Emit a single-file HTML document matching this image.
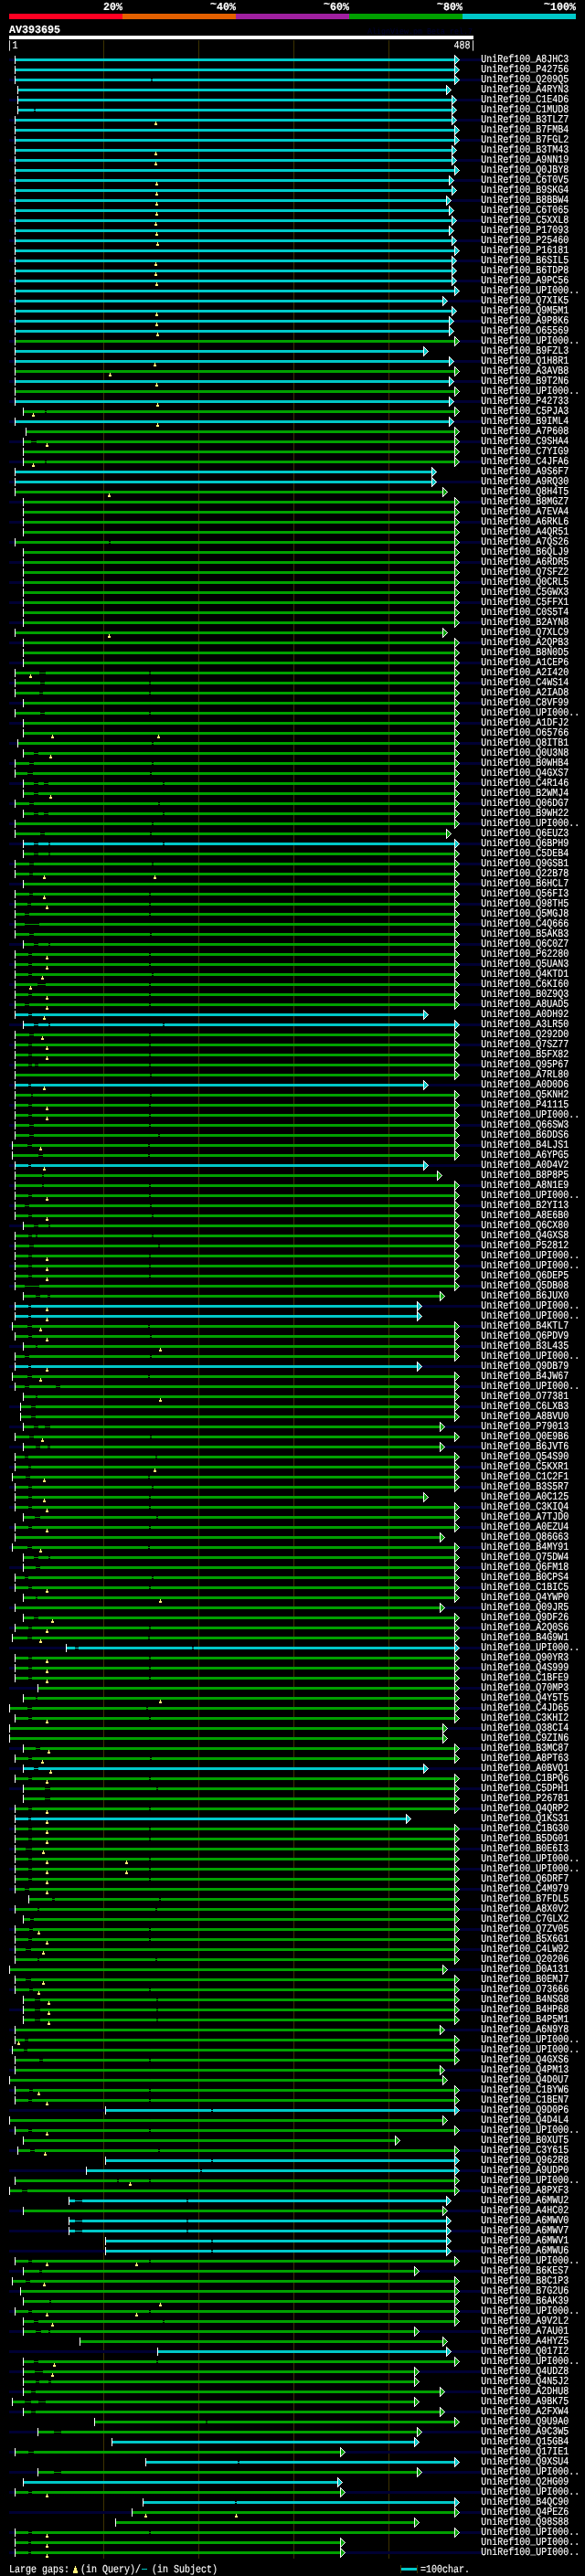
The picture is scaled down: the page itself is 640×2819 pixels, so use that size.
<!DOCTYPE html>
<html lang="en"><head><meta charset="utf-8"><title>AlignView AV393695</title>
<style>html,body{margin:0;padding:0;background:#000}body{width:640px;height:2819px;overflow:hidden}svg{display:block;will-change:transform}text{font-family:"Liberation Mono", "DejaVu Sans Mono", monospace;fill:#fff;white-space:pre;text-rendering:geometricPrecision}.b{font-weight:bold;font-size:12.1px;stroke:#fff;stroke-width:.15px}.s{font-size:12.1px;stroke:#fff;stroke-width:.12px}.t{font-size:9.1px;fill:#000033}</style></head><body>
<svg width="640" height="2819" viewBox="0 0 640 2819" shape-rendering="crispEdges">
<rect width="640" height="2819" fill="#000"/>
<rect x="10" y="15" width="124" height="6" fill="#ff0022"/>
<rect x="134" y="15" width="124" height="6" fill="#e46000"/>
<rect x="258" y="15" width="124" height="6" fill="#a020a0"/>
<rect x="382" y="15" width="124" height="6" fill="#00a000"/>
<rect x="506" y="15" width="124" height="6" fill="#00c8c8"/>
<text class="b" x="113" y="10.75" textLength="21" lengthAdjust="spacingAndGlyphs">20%</text>
<text class="b" x="230" y="10.75" dy="-3 3" textLength="28" lengthAdjust="spacingAndGlyphs">~40%</text>
<text class="b" x="354" y="10.75" dy="-3 3" textLength="28" lengthAdjust="spacingAndGlyphs">~60%</text>
<text class="b" x="478" y="10.75" dy="-3 3" textLength="28" lengthAdjust="spacingAndGlyphs">~80%</text>
<text class="b" x="595" y="10.75" dy="-3 3" textLength="35" lengthAdjust="spacingAndGlyphs">~100%</text>
<text class="b" x="10" y="35.75" textLength="56" lengthAdjust="spacingAndGlyphs">AV393695</text>
<text class="t" x="402" y="37" textLength="115" lengthAdjust="spacingAndGlyphs">AlignView.pm Beta rel.7</text>
<rect x="10" y="39" width="508" height="4" fill="#fff"/>
<text class="s" x="7.5" y="53" textLength="12" lengthAdjust="spacingAndGlyphs">|1</text>
<text class="s" x="496.5" y="53" textLength="24" lengthAdjust="spacingAndGlyphs">488|</text>
<rect x="113" y="44" width="1" height="2756" fill="#3c3200"/>
<rect x="217" y="44" width="1" height="2756" fill="#3c3200"/>
<rect x="321" y="44" width="1" height="2756" fill="#3c3200"/>
<rect x="425" y="44" width="1" height="2756" fill="#3c3200"/>
<path d="M10 64H16v3H10zM502 64H527v3H502z" fill="#000033"/>
<path d="M16 64h481v3h-481z" fill="#00c8c8"/>
<rect x="16" y="61" width="1" height="9" fill="#fff"/>
<polygon points="497.5,60.5 497.5,70.5 502.5,65.5" fill="#00c8c8" stroke="#fff" stroke-width="1"/>
<text class="s" x="526.3" y="68" textLength="96" lengthAdjust="spacingAndGlyphs" dy="0 0 0 0 0 0 0 0 0 -1 1">UniRef100_A8JHC3</text>
<path d="M16 75h481v3h-481z" fill="#00c8c8"/>
<rect x="16" y="72" width="1" height="9" fill="#fff"/>
<polygon points="497.5,71.5 497.5,81.5 502.5,76.5" fill="#00c8c8" stroke="#fff" stroke-width="1"/>
<text class="s" x="526.3" y="79" textLength="96" lengthAdjust="spacingAndGlyphs" dy="0 0 0 0 0 0 0 0 0 -1 1">UniRef100_P42756</text>
<path d="M10 86H16v3H10zM502 86H527v3H502z" fill="#000033"/>
<path d="M16 86h149v3h-149zM167 86h330v3h-330z" fill="#00c8c8"/>
<path d="M165 87h2v1h-2z" fill="#00c8c8"/>
<rect x="16" y="83" width="1" height="9" fill="#fff"/>
<polygon points="497.5,82.5 497.5,92.5 502.5,87.5" fill="#00c8c8" stroke="#fff" stroke-width="1"/>
<text class="s" x="526.3" y="90" textLength="96" lengthAdjust="spacingAndGlyphs" dy="0 0 0 0 0 0 0 0 0 -1 1">UniRef100_Q209Q5</text>
<path d="M19 97h469v3h-469z" fill="#00c8c8"/>
<rect x="19" y="94" width="1" height="9" fill="#fff"/>
<polygon points="488.5,93.5 488.5,103.5 493.5,98.5" fill="#00c8c8" stroke="#fff" stroke-width="1"/>
<text class="s" x="526.3" y="101" textLength="96" lengthAdjust="spacingAndGlyphs" dy="0 0 0 0 0 0 0 0 0 -1 1">UniRef100_A4RYN3</text>
<path d="M10 108H19v3H10zM499 108H527v3H499z" fill="#000033"/>
<path d="M19 108h475v3h-475z" fill="#00c8c8"/>
<rect x="19" y="105" width="1" height="9" fill="#fff"/>
<polygon points="494.5,104.5 494.5,114.5 499.5,109.5" fill="#00c8c8" stroke="#fff" stroke-width="1"/>
<text class="s" x="526.3" y="112" textLength="96" lengthAdjust="spacingAndGlyphs" dy="0 0 0 0 0 0 0 0 0 -1 1">UniRef100_C1E4D6</text>
<path d="M19 119h18v3h-18zM39 119h455v3h-455z" fill="#00c8c8"/>
<path d="M37 120h2v1h-2z" fill="#00c8c8"/>
<rect x="19" y="116" width="1" height="9" fill="#fff"/>
<polygon points="494.5,115.5 494.5,125.5 499.5,120.5" fill="#00c8c8" stroke="#fff" stroke-width="1"/>
<text class="s" x="526.3" y="123" textLength="96" lengthAdjust="spacingAndGlyphs" dy="0 0 0 0 0 0 0 0 0 -1 1">UniRef100_C1MUD8</text>
<path d="M10 130H16v3H10zM499 130H527v3H499z" fill="#000033"/>
<path d="M16 130h478v3h-478z" fill="#00c8c8"/>
<rect x="16" y="127" width="1" height="9" fill="#fff"/>
<polygon points="494.5,126.5 494.5,136.5 499.5,131.5" fill="#00c8c8" stroke="#fff" stroke-width="1"/>
<path d="M170 133h1v2h1v2h-3v-2h1z" fill="#fff078"/>
<text class="s" x="526.3" y="134" textLength="96" lengthAdjust="spacingAndGlyphs" dy="0 0 0 0 0 0 0 0 0 -1 1">UniRef100_B3TLZ7</text>
<path d="M16 141h481v3h-481z" fill="#00c8c8"/>
<rect x="16" y="138" width="1" height="9" fill="#fff"/>
<polygon points="497.5,137.5 497.5,147.5 502.5,142.5" fill="#00c8c8" stroke="#fff" stroke-width="1"/>
<text class="s" x="526.3" y="145" textLength="96" lengthAdjust="spacingAndGlyphs" dy="0 0 0 0 0 0 0 0 0 -1 1">UniRef100_B7FMB4</text>
<path d="M10 152H16v3H10zM502 152H527v3H502z" fill="#000033"/>
<path d="M16 152h481v3h-481z" fill="#00c8c8"/>
<rect x="16" y="149" width="1" height="9" fill="#fff"/>
<polygon points="497.5,148.5 497.5,158.5 502.5,153.5" fill="#00c8c8" stroke="#fff" stroke-width="1"/>
<text class="s" x="526.3" y="156" textLength="96" lengthAdjust="spacingAndGlyphs" dy="0 0 0 0 0 0 0 0 0 -1 1">UniRef100_B7FGL2</text>
<path d="M16 163h478v3h-478z" fill="#00c8c8"/>
<rect x="16" y="160" width="1" height="9" fill="#fff"/>
<polygon points="494.5,159.5 494.5,169.5 499.5,164.5" fill="#00c8c8" stroke="#fff" stroke-width="1"/>
<path d="M170 166h1v2h1v2h-3v-2h1z" fill="#fff078"/>
<text class="s" x="526.3" y="167" textLength="96" lengthAdjust="spacingAndGlyphs" dy="0 0 0 0 0 0 0 0 0 -1 1">UniRef100_B3TM43</text>
<path d="M10 174H16v3H10zM499 174H527v3H499z" fill="#000033"/>
<path d="M16 174h478v3h-478z" fill="#00c8c8"/>
<rect x="16" y="171" width="1" height="9" fill="#fff"/>
<polygon points="494.5,170.5 494.5,180.5 499.5,175.5" fill="#00c8c8" stroke="#fff" stroke-width="1"/>
<path d="M170 177h1v2h1v2h-3v-2h1z" fill="#fff078"/>
<text class="s" x="526.3" y="178" textLength="96" lengthAdjust="spacingAndGlyphs" dy="0 0 0 0 0 0 0 0 0 -1 1">UniRef100_A9NN19</text>
<path d="M16 185h481v3h-481z" fill="#00c8c8"/>
<rect x="16" y="182" width="1" height="9" fill="#fff"/>
<polygon points="497.5,181.5 497.5,191.5 502.5,186.5" fill="#00c8c8" stroke="#fff" stroke-width="1"/>
<text class="s" x="526.3" y="189" textLength="96" lengthAdjust="spacingAndGlyphs" dy="0 0 0 0 0 0 0 0 0 -1 1">UniRef100_Q0JBY8</text>
<path d="M10 196H16v3H10zM496 196H527v3H496z" fill="#000033"/>
<path d="M16 196h475v3h-475z" fill="#00c8c8"/>
<rect x="16" y="193" width="1" height="9" fill="#fff"/>
<polygon points="491.5,192.5 491.5,202.5 496.5,197.5" fill="#00c8c8" stroke="#fff" stroke-width="1"/>
<path d="M171 199h1v2h1v2h-3v-2h1z" fill="#fff078"/>
<text class="s" x="526.3" y="200" textLength="96" lengthAdjust="spacingAndGlyphs" dy="0 0 0 0 0 0 0 0 0 -1 1">UniRef100_C6T0V5</text>
<path d="M16 207h478v3h-478z" fill="#00c8c8"/>
<rect x="16" y="204" width="1" height="9" fill="#fff"/>
<polygon points="494.5,203.5 494.5,213.5 499.5,208.5" fill="#00c8c8" stroke="#fff" stroke-width="1"/>
<path d="M171 210h1v2h1v2h-3v-2h1z" fill="#fff078"/>
<text class="s" x="526.3" y="211" textLength="96" lengthAdjust="spacingAndGlyphs" dy="0 0 0 0 0 0 0 0 0 -1 1">UniRef100_B9SKG4</text>
<path d="M10 218H16v3H10zM493 218H527v3H493z" fill="#000033"/>
<path d="M16 218h472v3h-472z" fill="#00c8c8"/>
<rect x="16" y="215" width="1" height="9" fill="#fff"/>
<polygon points="488.5,214.5 488.5,224.5 493.5,219.5" fill="#00c8c8" stroke="#fff" stroke-width="1"/>
<path d="M171 221h1v2h1v2h-3v-2h1z" fill="#fff078"/>
<text class="s" x="526.3" y="222" textLength="96" lengthAdjust="spacingAndGlyphs" dy="0 0 0 0 0 0 0 0 0 -1 1">UniRef100_B8BBW4</text>
<path d="M16 229h475v3h-475z" fill="#00c8c8"/>
<rect x="16" y="226" width="1" height="9" fill="#fff"/>
<polygon points="491.5,225.5 491.5,235.5 496.5,230.5" fill="#00c8c8" stroke="#fff" stroke-width="1"/>
<path d="M171 232h1v2h1v2h-3v-2h1z" fill="#fff078"/>
<text class="s" x="526.3" y="233" textLength="96" lengthAdjust="spacingAndGlyphs" dy="0 0 0 0 0 0 0 0 0 -1 1">UniRef100_C6T065</text>
<path d="M10 240H16v3H10zM499 240H527v3H499z" fill="#000033"/>
<path d="M16 240h478v3h-478z" fill="#00c8c8"/>
<rect x="16" y="237" width="1" height="9" fill="#fff"/>
<polygon points="494.5,236.5 494.5,246.5 499.5,241.5" fill="#00c8c8" stroke="#fff" stroke-width="1"/>
<path d="M170 243h1v2h1v2h-3v-2h1z" fill="#fff078"/>
<text class="s" x="526.3" y="244" textLength="96" lengthAdjust="spacingAndGlyphs" dy="0 0 0 0 0 0 0 0 0 -1 1">UniRef100_C5XXL8</text>
<path d="M16 251h475v3h-475z" fill="#00c8c8"/>
<rect x="16" y="248" width="1" height="9" fill="#fff"/>
<polygon points="491.5,247.5 491.5,257.5 496.5,252.5" fill="#00c8c8" stroke="#fff" stroke-width="1"/>
<path d="M171 254h1v2h1v2h-3v-2h1z" fill="#fff078"/>
<text class="s" x="526.3" y="255" textLength="96" lengthAdjust="spacingAndGlyphs" dy="0 0 0 0 0 0 0 0 0 -1 1">UniRef100_P17093</text>
<path d="M10 262H16v3H10zM499 262H527v3H499z" fill="#000033"/>
<path d="M16 262h478v3h-478z" fill="#00c8c8"/>
<rect x="16" y="259" width="1" height="9" fill="#fff"/>
<polygon points="494.5,258.5 494.5,268.5 499.5,263.5" fill="#00c8c8" stroke="#fff" stroke-width="1"/>
<path d="M172 265h1v2h1v2h-3v-2h1z" fill="#fff078"/>
<text class="s" x="526.3" y="266" textLength="96" lengthAdjust="spacingAndGlyphs" dy="0 0 0 0 0 0 0 0 0 -1 1">UniRef100_P25460</text>
<path d="M16 273h481v3h-481z" fill="#00c8c8"/>
<rect x="16" y="270" width="1" height="9" fill="#fff"/>
<polygon points="497.5,269.5 497.5,279.5 502.5,274.5" fill="#00c8c8" stroke="#fff" stroke-width="1"/>
<text class="s" x="526.3" y="277" textLength="96" lengthAdjust="spacingAndGlyphs" dy="0 0 0 0 0 0 0 0 0 -1 1">UniRef100_P16181</text>
<path d="M10 284H16v3H10zM499 284H527v3H499z" fill="#000033"/>
<path d="M16 284h478v3h-478z" fill="#00c8c8"/>
<rect x="16" y="281" width="1" height="9" fill="#fff"/>
<polygon points="494.5,280.5 494.5,290.5 499.5,285.5" fill="#00c8c8" stroke="#fff" stroke-width="1"/>
<path d="M170 287h1v2h1v2h-3v-2h1z" fill="#fff078"/>
<text class="s" x="526.3" y="288" textLength="96" lengthAdjust="spacingAndGlyphs" dy="0 0 0 0 0 0 0 0 0 -1 1">UniRef100_B6SIL5</text>
<path d="M16 295h478v3h-478z" fill="#00c8c8"/>
<rect x="16" y="292" width="1" height="9" fill="#fff"/>
<polygon points="494.5,291.5 494.5,301.5 499.5,296.5" fill="#00c8c8" stroke="#fff" stroke-width="1"/>
<path d="M170 298h1v2h1v2h-3v-2h1z" fill="#fff078"/>
<text class="s" x="526.3" y="299" textLength="96" lengthAdjust="spacingAndGlyphs" dy="0 0 0 0 0 0 0 0 0 -1 1">UniRef100_B6TDP8</text>
<path d="M10 306H16v3H10zM499 306H527v3H499z" fill="#000033"/>
<path d="M16 306h478v3h-478z" fill="#00c8c8"/>
<rect x="16" y="303" width="1" height="9" fill="#fff"/>
<polygon points="494.5,302.5 494.5,312.5 499.5,307.5" fill="#00c8c8" stroke="#fff" stroke-width="1"/>
<path d="M171 309h1v2h1v2h-3v-2h1z" fill="#fff078"/>
<text class="s" x="526.3" y="310" textLength="96" lengthAdjust="spacingAndGlyphs" dy="0 0 0 0 0 0 0 0 0 -1 1">UniRef100_A9PC56</text>
<path d="M16 317h481v3h-481z" fill="#00c8c8"/>
<rect x="16" y="314" width="1" height="9" fill="#fff"/>
<polygon points="497.5,313.5 497.5,323.5 502.5,318.5" fill="#00c8c8" stroke="#fff" stroke-width="1"/>
<text class="s" x="526.3" y="321" textLength="108" lengthAdjust="spacingAndGlyphs" dy="0 0 0 0 0 0 0 0 0 -1 1">UniRef100_UPI000..</text>
<path d="M10 328H16v3H10zM489 328H527v3H489z" fill="#000033"/>
<path d="M16 328h468v3h-468z" fill="#00c8c8"/>
<rect x="16" y="325" width="1" height="9" fill="#fff"/>
<polygon points="484.5,324.5 484.5,334.5 489.5,329.5" fill="#00c8c8" stroke="#fff" stroke-width="1"/>
<text class="s" x="526.3" y="332" textLength="96" lengthAdjust="spacingAndGlyphs" dy="0 0 0 0 0 0 0 0 0 -1 1">UniRef100_Q7XIK5</text>
<path d="M16 339h478v3h-478z" fill="#00c8c8"/>
<rect x="16" y="336" width="1" height="9" fill="#fff"/>
<polygon points="494.5,335.5 494.5,345.5 499.5,340.5" fill="#00c8c8" stroke="#fff" stroke-width="1"/>
<path d="M171 342h1v2h1v2h-3v-2h1z" fill="#fff078"/>
<text class="s" x="526.3" y="343" textLength="96" lengthAdjust="spacingAndGlyphs" dy="0 0 0 0 0 0 0 0 0 -1 1">UniRef100_Q9M5M1</text>
<path d="M10 350H16v3H10zM496 350H527v3H496z" fill="#000033"/>
<path d="M16 350h475v3h-475z" fill="#00c8c8"/>
<rect x="16" y="347" width="1" height="9" fill="#fff"/>
<polygon points="491.5,346.5 491.5,356.5 496.5,351.5" fill="#00c8c8" stroke="#fff" stroke-width="1"/>
<path d="M171 353h1v2h1v2h-3v-2h1z" fill="#fff078"/>
<text class="s" x="526.3" y="354" textLength="96" lengthAdjust="spacingAndGlyphs" dy="0 0 0 0 0 0 0 0 0 -1 1">UniRef100_A9P8K6</text>
<path d="M16 361h475v3h-475z" fill="#00c8c8"/>
<rect x="16" y="358" width="1" height="9" fill="#fff"/>
<polygon points="491.5,357.5 491.5,367.5 496.5,362.5" fill="#00c8c8" stroke="#fff" stroke-width="1"/>
<path d="M172 364h1v2h1v2h-3v-2h1z" fill="#fff078"/>
<text class="s" x="526.3" y="365" textLength="96" lengthAdjust="spacingAndGlyphs" dy="0 0 0 0 0 0 0 0 0 -1 1">UniRef100_O65569</text>
<path d="M10 372H16v3H10zM502 372H527v3H502z" fill="#000033"/>
<path d="M16 372h481v3h-481z" fill="#00a000"/>
<rect x="16" y="369" width="1" height="9" fill="#fff"/>
<polygon points="497.5,368.5 497.5,378.5 502.5,373.5" fill="#00a000" stroke="#fff" stroke-width="1"/>
<text class="s" x="526.3" y="376" textLength="108" lengthAdjust="spacingAndGlyphs" dy="0 0 0 0 0 0 0 0 0 -1 1">UniRef100_UPI000..</text>
<path d="M16 383h447v3h-447z" fill="#00c8c8"/>
<rect x="16" y="380" width="1" height="9" fill="#fff"/>
<polygon points="463.5,379.5 463.5,389.5 468.5,384.5" fill="#00c8c8" stroke="#fff" stroke-width="1"/>
<text class="s" x="526.3" y="387" textLength="96" lengthAdjust="spacingAndGlyphs" dy="0 0 0 0 0 0 0 0 0 -1 1">UniRef100_B9FZL3</text>
<path d="M10 394H16v3H10zM496 394H527v3H496z" fill="#000033"/>
<path d="M16 394h475v3h-475z" fill="#00c8c8"/>
<rect x="16" y="391" width="1" height="9" fill="#fff"/>
<polygon points="491.5,390.5 491.5,400.5 496.5,395.5" fill="#00c8c8" stroke="#fff" stroke-width="1"/>
<path d="M169 397h1v2h1v2h-3v-2h1z" fill="#fff078"/>
<text class="s" x="526.3" y="398" textLength="96" lengthAdjust="spacingAndGlyphs" dy="0 0 0 0 0 0 0 0 0 -1 1">UniRef100_Q1H8R1</text>
<path d="M16 405h481v3h-481z" fill="#00a000"/>
<rect x="16" y="402" width="1" height="9" fill="#fff"/>
<polygon points="497.5,401.5 497.5,411.5 502.5,406.5" fill="#00a000" stroke="#fff" stroke-width="1"/>
<path d="M120 408h1v2h1v2h-3v-2h1z" fill="#fff078"/>
<text class="s" x="526.3" y="409" textLength="96" lengthAdjust="spacingAndGlyphs" dy="0 0 0 0 0 0 0 0 0 -1 1">UniRef100_A3AVB8</text>
<path d="M10 416H16v3H10zM496 416H527v3H496z" fill="#000033"/>
<path d="M16 416h475v3h-475z" fill="#00c8c8"/>
<rect x="16" y="413" width="1" height="9" fill="#fff"/>
<polygon points="491.5,412.5 491.5,422.5 496.5,417.5" fill="#00c8c8" stroke="#fff" stroke-width="1"/>
<path d="M171 419h1v2h1v2h-3v-2h1z" fill="#fff078"/>
<text class="s" x="526.3" y="420" textLength="96" lengthAdjust="spacingAndGlyphs" dy="0 0 0 0 0 0 0 0 0 -1 1">UniRef100_B9T2N6</text>
<path d="M16 427h481v3h-481z" fill="#00a000"/>
<rect x="16" y="424" width="1" height="9" fill="#fff"/>
<polygon points="497.5,423.5 497.5,433.5 502.5,428.5" fill="#00a000" stroke="#fff" stroke-width="1"/>
<text class="s" x="526.3" y="431" textLength="108" lengthAdjust="spacingAndGlyphs" dy="0 0 0 0 0 0 0 0 0 -1 1">UniRef100_UPI000..</text>
<path d="M10 438H16v3H10zM496 438H527v3H496z" fill="#000033"/>
<path d="M16 438h475v3h-475z" fill="#00c8c8"/>
<rect x="16" y="435" width="1" height="9" fill="#fff"/>
<polygon points="491.5,434.5 491.5,444.5 496.5,439.5" fill="#00c8c8" stroke="#fff" stroke-width="1"/>
<path d="M172 441h1v2h1v2h-3v-2h1z" fill="#fff078"/>
<text class="s" x="526.3" y="442" textLength="96" lengthAdjust="spacingAndGlyphs" dy="0 0 0 0 0 0 0 0 0 -1 1">UniRef100_P42733</text>
<path d="M25 449h24v3h-24zM51 449h446v3h-446z" fill="#00a000"/>
<path d="M49 450h2v1h-2z" fill="#00a000"/>
<rect x="25" y="446" width="1" height="9" fill="#fff"/>
<polygon points="497.5,445.5 497.5,455.5 502.5,450.5" fill="#00a000" stroke="#fff" stroke-width="1"/>
<path d="M36 452h1v2h1v2h-3v-2h1z" fill="#fff078"/>
<text class="s" x="526.3" y="453" textLength="96" lengthAdjust="spacingAndGlyphs" dy="0 0 0 0 0 0 0 0 0 -1 1">UniRef100_C5PJA3</text>
<path d="M10 460H16v3H10zM496 460H527v3H496z" fill="#000033"/>
<path d="M16 460h475v3h-475z" fill="#00c8c8"/>
<rect x="16" y="457" width="1" height="9" fill="#fff"/>
<polygon points="491.5,456.5 491.5,466.5 496.5,461.5" fill="#00c8c8" stroke="#fff" stroke-width="1"/>
<path d="M172 463h1v2h1v2h-3v-2h1z" fill="#fff078"/>
<text class="s" x="526.3" y="464" textLength="96" lengthAdjust="spacingAndGlyphs" dy="0 0 0 0 0 0 0 0 0 -1 1">UniRef100_B9IML4</text>
<path d="M28 471h469v3h-469z" fill="#00a000"/>
<rect x="28" y="468" width="1" height="9" fill="#fff"/>
<polygon points="497.5,467.5 497.5,477.5 502.5,472.5" fill="#00a000" stroke="#fff" stroke-width="1"/>
<text class="s" x="526.3" y="475" textLength="96" lengthAdjust="spacingAndGlyphs" dy="0 0 0 0 0 0 0 0 0 -1 1">UniRef100_A7P608</text>
<path d="M10 482H25v3H10zM502 482H527v3H502z" fill="#000033"/>
<path d="M25 482h9v3h-9zM40 482h457v3h-457z" fill="#00a000"/>
<path d="M34 483h6v1h-6z" fill="#00a000"/>
<rect x="25" y="479" width="1" height="9" fill="#fff"/>
<polygon points="497.5,478.5 497.5,488.5 502.5,483.5" fill="#00a000" stroke="#fff" stroke-width="1"/>
<path d="M51 485h1v2h1v2h-3v-2h1z" fill="#fff078"/>
<text class="s" x="526.3" y="486" textLength="96" lengthAdjust="spacingAndGlyphs" dy="0 0 0 0 0 0 0 0 0 -1 1">UniRef100_C9SHA4</text>
<path d="M25 493h472v3h-472z" fill="#00a000"/>
<rect x="25" y="490" width="1" height="9" fill="#fff"/>
<polygon points="497.5,489.5 497.5,499.5 502.5,494.5" fill="#00a000" stroke="#fff" stroke-width="1"/>
<text class="s" x="526.3" y="497" textLength="96" lengthAdjust="spacingAndGlyphs" dy="0 0 0 0 0 0 0 0 0 -1 1">UniRef100_C7YIG9</text>
<path d="M10 504H25v3H10zM502 504H527v3H502z" fill="#000033"/>
<path d="M25 504h24v3h-24zM51 504h446v3h-446z" fill="#00a000"/>
<path d="M49 505h2v1h-2z" fill="#00a000"/>
<rect x="25" y="501" width="1" height="9" fill="#fff"/>
<polygon points="497.5,500.5 497.5,510.5 502.5,505.5" fill="#00a000" stroke="#fff" stroke-width="1"/>
<path d="M36 507h1v2h1v2h-3v-2h1z" fill="#fff078"/>
<text class="s" x="526.3" y="508" textLength="96" lengthAdjust="spacingAndGlyphs" dy="0 0 0 0 0 0 0 0 0 -1 1">UniRef100_C4JFA6</text>
<path d="M16 515h456v3h-456z" fill="#00c8c8"/>
<rect x="16" y="512" width="1" height="9" fill="#fff"/>
<polygon points="472.5,511.5 472.5,521.5 477.5,516.5" fill="#00c8c8" stroke="#fff" stroke-width="1"/>
<text class="s" x="526.3" y="519" textLength="96" lengthAdjust="spacingAndGlyphs" dy="0 0 0 0 0 0 0 0 0 -1 1">UniRef100_A9S6F7</text>
<path d="M10 526H16v3H10zM477 526H527v3H477z" fill="#000033"/>
<path d="M16 526h456v3h-456z" fill="#00c8c8"/>
<rect x="16" y="523" width="1" height="9" fill="#fff"/>
<polygon points="472.5,522.5 472.5,532.5 477.5,527.5" fill="#00c8c8" stroke="#fff" stroke-width="1"/>
<text class="s" x="526.3" y="530" textLength="96" lengthAdjust="spacingAndGlyphs" dy="0 0 0 0 0 0 0 0 0 -1 1">UniRef100_A9RQ30</text>
<path d="M16 537h468v3h-468z" fill="#00a000"/>
<rect x="16" y="534" width="1" height="9" fill="#fff"/>
<polygon points="484.5,533.5 484.5,543.5 489.5,538.5" fill="#00a000" stroke="#fff" stroke-width="1"/>
<path d="M119 540h1v2h1v2h-3v-2h1z" fill="#fff078"/>
<text class="s" x="526.3" y="541" textLength="96" lengthAdjust="spacingAndGlyphs" dy="0 0 0 0 0 0 0 0 0 -1 1">UniRef100_Q8H4T5</text>
<path d="M10 548H25v3H10zM502 548H527v3H502z" fill="#000033"/>
<path d="M25 548h472v3h-472z" fill="#00a000"/>
<rect x="25" y="545" width="1" height="9" fill="#fff"/>
<polygon points="497.5,544.5 497.5,554.5 502.5,549.5" fill="#00a000" stroke="#fff" stroke-width="1"/>
<text class="s" x="526.3" y="552" textLength="96" lengthAdjust="spacingAndGlyphs" dy="0 0 0 0 0 0 0 0 0 -1 1">UniRef100_B8MGZ7</text>
<path d="M25 559h472v3h-472z" fill="#00a000"/>
<rect x="25" y="556" width="1" height="9" fill="#fff"/>
<polygon points="497.5,555.5 497.5,565.5 502.5,560.5" fill="#00a000" stroke="#fff" stroke-width="1"/>
<text class="s" x="526.3" y="563" textLength="96" lengthAdjust="spacingAndGlyphs" dy="0 0 0 0 0 0 0 0 0 -1 1">UniRef100_A7EVA4</text>
<path d="M10 570H25v3H10zM502 570H527v3H502z" fill="#000033"/>
<path d="M25 570h472v3h-472z" fill="#00a000"/>
<rect x="25" y="567" width="1" height="9" fill="#fff"/>
<polygon points="497.5,566.5 497.5,576.5 502.5,571.5" fill="#00a000" stroke="#fff" stroke-width="1"/>
<text class="s" x="526.3" y="574" textLength="96" lengthAdjust="spacingAndGlyphs" dy="0 0 0 0 0 0 0 0 0 -1 1">UniRef100_A6RKL6</text>
<path d="M25 581h472v3h-472z" fill="#00a000"/>
<rect x="25" y="578" width="1" height="9" fill="#fff"/>
<polygon points="497.5,577.5 497.5,587.5 502.5,582.5" fill="#00a000" stroke="#fff" stroke-width="1"/>
<text class="s" x="526.3" y="585" textLength="96" lengthAdjust="spacingAndGlyphs" dy="0 0 0 0 0 0 0 0 0 -1 1">UniRef100_A4QR51</text>
<path d="M10 592H16v3H10zM502 592H527v3H502z" fill="#000033"/>
<path d="M16 592h103v3h-103zM121 592h376v3h-376z" fill="#00a000"/>
<path d="M119 593h2v1h-2z" fill="#00a000"/>
<rect x="16" y="589" width="1" height="9" fill="#fff"/>
<polygon points="497.5,588.5 497.5,598.5 502.5,593.5" fill="#00a000" stroke="#fff" stroke-width="1"/>
<text class="s" x="526.3" y="596" textLength="96" lengthAdjust="spacingAndGlyphs" dy="0 0 0 0 0 0 0 0 0 -1 1">UniRef100_A7QS26</text>
<path d="M25 603h472v3h-472z" fill="#00a000"/>
<rect x="25" y="600" width="1" height="9" fill="#fff"/>
<polygon points="497.5,599.5 497.5,609.5 502.5,604.5" fill="#00a000" stroke="#fff" stroke-width="1"/>
<text class="s" x="526.3" y="607" textLength="96" lengthAdjust="spacingAndGlyphs" dy="0 0 0 0 0 0 0 0 0 -1 1">UniRef100_B6QLJ9</text>
<path d="M10 614H25v3H10zM502 614H527v3H502z" fill="#000033"/>
<path d="M25 614h472v3h-472z" fill="#00a000"/>
<rect x="25" y="611" width="1" height="9" fill="#fff"/>
<polygon points="497.5,610.5 497.5,620.5 502.5,615.5" fill="#00a000" stroke="#fff" stroke-width="1"/>
<text class="s" x="526.3" y="618" textLength="96" lengthAdjust="spacingAndGlyphs" dy="0 0 0 0 0 0 0 0 0 -1 1">UniRef100_A6RDR5</text>
<path d="M25 625h472v3h-472z" fill="#00a000"/>
<rect x="25" y="622" width="1" height="9" fill="#fff"/>
<polygon points="497.5,621.5 497.5,631.5 502.5,626.5" fill="#00a000" stroke="#fff" stroke-width="1"/>
<text class="s" x="526.3" y="629" textLength="96" lengthAdjust="spacingAndGlyphs" dy="0 0 0 0 0 0 0 0 0 -1 1">UniRef100_Q7SFZ2</text>
<path d="M10 636H25v3H10zM502 636H527v3H502z" fill="#000033"/>
<path d="M25 636h472v3h-472z" fill="#00a000"/>
<rect x="25" y="633" width="1" height="9" fill="#fff"/>
<polygon points="497.5,632.5 497.5,642.5 502.5,637.5" fill="#00a000" stroke="#fff" stroke-width="1"/>
<text class="s" x="526.3" y="640" textLength="96" lengthAdjust="spacingAndGlyphs" dy="0 0 0 0 0 0 0 0 0 -1 1">UniRef100_Q0CRL5</text>
<path d="M25 647h472v3h-472z" fill="#00a000"/>
<rect x="25" y="644" width="1" height="9" fill="#fff"/>
<polygon points="497.5,643.5 497.5,653.5 502.5,648.5" fill="#00a000" stroke="#fff" stroke-width="1"/>
<text class="s" x="526.3" y="651" textLength="96" lengthAdjust="spacingAndGlyphs" dy="0 0 0 0 0 0 0 0 0 -1 1">UniRef100_C5GWX3</text>
<path d="M10 658H25v3H10zM502 658H527v3H502z" fill="#000033"/>
<path d="M25 658h472v3h-472z" fill="#00a000"/>
<rect x="25" y="655" width="1" height="9" fill="#fff"/>
<polygon points="497.5,654.5 497.5,664.5 502.5,659.5" fill="#00a000" stroke="#fff" stroke-width="1"/>
<text class="s" x="526.3" y="662" textLength="96" lengthAdjust="spacingAndGlyphs" dy="0 0 0 0 0 0 0 0 0 -1 1">UniRef100_C5FFX1</text>
<path d="M25 669h472v3h-472z" fill="#00a000"/>
<rect x="25" y="666" width="1" height="9" fill="#fff"/>
<polygon points="497.5,665.5 497.5,675.5 502.5,670.5" fill="#00a000" stroke="#fff" stroke-width="1"/>
<text class="s" x="526.3" y="673" textLength="96" lengthAdjust="spacingAndGlyphs" dy="0 0 0 0 0 0 0 0 0 -1 1">UniRef100_C0S5T4</text>
<path d="M10 680H25v3H10zM502 680H527v3H502z" fill="#000033"/>
<path d="M25 680h472v3h-472z" fill="#00a000"/>
<rect x="25" y="677" width="1" height="9" fill="#fff"/>
<polygon points="497.5,676.5 497.5,686.5 502.5,681.5" fill="#00a000" stroke="#fff" stroke-width="1"/>
<text class="s" x="526.3" y="684" textLength="96" lengthAdjust="spacingAndGlyphs" dy="0 0 0 0 0 0 0 0 0 -1 1">UniRef100_B2AYN8</text>
<path d="M16 691h468v3h-468z" fill="#00a000"/>
<rect x="16" y="688" width="1" height="9" fill="#fff"/>
<polygon points="484.5,687.5 484.5,697.5 489.5,692.5" fill="#00a000" stroke="#fff" stroke-width="1"/>
<path d="M119 694h1v2h1v2h-3v-2h1z" fill="#fff078"/>
<text class="s" x="526.3" y="695" textLength="96" lengthAdjust="spacingAndGlyphs" dy="0 0 0 0 0 0 0 0 0 -1 1">UniRef100_Q7XLC9</text>
<path d="M10 702H25v3H10zM502 702H527v3H502z" fill="#000033"/>
<path d="M25 702h472v3h-472z" fill="#00a000"/>
<rect x="25" y="699" width="1" height="9" fill="#fff"/>
<polygon points="497.5,698.5 497.5,708.5 502.5,703.5" fill="#00a000" stroke="#fff" stroke-width="1"/>
<text class="s" x="526.3" y="706" textLength="96" lengthAdjust="spacingAndGlyphs" dy="0 0 0 0 0 0 0 0 0 -1 1">UniRef100_A2QPB3</text>
<path d="M25 713h472v3h-472z" fill="#00a000"/>
<rect x="25" y="710" width="1" height="9" fill="#fff"/>
<polygon points="497.5,709.5 497.5,719.5 502.5,714.5" fill="#00a000" stroke="#fff" stroke-width="1"/>
<text class="s" x="526.3" y="717" textLength="96" lengthAdjust="spacingAndGlyphs" dy="0 0 0 0 0 0 0 0 0 -1 1">UniRef100_B8N0D5</text>
<path d="M10 724H25v3H10zM502 724H527v3H502z" fill="#000033"/>
<path d="M25 724h472v3h-472z" fill="#00a000"/>
<rect x="25" y="721" width="1" height="9" fill="#fff"/>
<polygon points="497.5,720.5 497.5,730.5 502.5,725.5" fill="#00a000" stroke="#fff" stroke-width="1"/>
<text class="s" x="526.3" y="728" textLength="96" lengthAdjust="spacingAndGlyphs" dy="0 0 0 0 0 0 0 0 0 -1 1">UniRef100_A1CEP6</text>
<path d="M16 735h27v3h-27zM50 735h113v3h-113zM165 735h332v3h-332z" fill="#00a000"/>
<path d="M43 736h7v1h-7zM163 736h2v1h-2z" fill="#00a000"/>
<rect x="16" y="732" width="1" height="9" fill="#fff"/>
<polygon points="497.5,731.5 497.5,741.5 502.5,736.5" fill="#00a000" stroke="#fff" stroke-width="1"/>
<path d="M33 738h1v2h1v2h-3v-2h1z" fill="#fff078"/>
<text class="s" x="526.3" y="739" textLength="96" lengthAdjust="spacingAndGlyphs" dy="0 0 0 0 0 0 0 0 0 -1 1">UniRef100_A2I420</text>
<path d="M10 746H16v3H10zM502 746H527v3H502z" fill="#000033"/>
<path d="M16 746h28v3h-28zM49 746h114v3h-114zM165 746h332v3h-332z" fill="#00a000"/>
<path d="M44 747h5v1h-5zM163 747h2v1h-2z" fill="#00a000"/>
<rect x="16" y="743" width="1" height="9" fill="#fff"/>
<polygon points="497.5,742.5 497.5,752.5 502.5,747.5" fill="#00a000" stroke="#fff" stroke-width="1"/>
<text class="s" x="526.3" y="750" textLength="96" lengthAdjust="spacingAndGlyphs" dy="0 0 0 0 0 0 0 0 0 -1 1">UniRef100_C4WS14</text>
<path d="M16 757h27v3h-27zM47 757h116v3h-116zM165 757h332v3h-332z" fill="#00a000"/>
<path d="M43 758h4v1h-4zM163 758h2v1h-2z" fill="#00a000"/>
<rect x="16" y="754" width="1" height="9" fill="#fff"/>
<polygon points="497.5,753.5 497.5,763.5 502.5,758.5" fill="#00a000" stroke="#fff" stroke-width="1"/>
<text class="s" x="526.3" y="761" textLength="96" lengthAdjust="spacingAndGlyphs" dy="0 0 0 0 0 0 0 0 0 -1 1">UniRef100_A2IAD8</text>
<path d="M10 768H25v3H10zM502 768H527v3H502z" fill="#000033"/>
<path d="M25 768h472v3h-472z" fill="#00a000"/>
<rect x="25" y="765" width="1" height="9" fill="#fff"/>
<polygon points="497.5,764.5 497.5,774.5 502.5,769.5" fill="#00a000" stroke="#fff" stroke-width="1"/>
<text class="s" x="526.3" y="772" textLength="96" lengthAdjust="spacingAndGlyphs" dy="0 0 0 0 0 0 0 0 0 -1 1">UniRef100_C8VF99</text>
<path d="M16 779h28v3h-28zM49 779h114v3h-114zM165 779h332v3h-332z" fill="#00a000"/>
<path d="M44 780h5v1h-5zM163 780h2v1h-2z" fill="#00a000"/>
<rect x="16" y="776" width="1" height="9" fill="#fff"/>
<polygon points="497.5,775.5 497.5,785.5 502.5,780.5" fill="#00a000" stroke="#fff" stroke-width="1"/>
<text class="s" x="526.3" y="783" textLength="108" lengthAdjust="spacingAndGlyphs" dy="0 0 0 0 0 0 0 0 0 -1 1">UniRef100_UPI000..</text>
<path d="M10 790H25v3H10zM502 790H527v3H502z" fill="#000033"/>
<path d="M25 790h472v3h-472z" fill="#00a000"/>
<rect x="25" y="787" width="1" height="9" fill="#fff"/>
<polygon points="497.5,786.5 497.5,796.5 502.5,791.5" fill="#00a000" stroke="#fff" stroke-width="1"/>
<text class="s" x="526.3" y="794" textLength="96" lengthAdjust="spacingAndGlyphs" dy="0 0 0 0 0 0 0 0 0 -1 1">UniRef100_A1DFJ2</text>
<path d="M25 801h472v3h-472z" fill="#00a000"/>
<rect x="25" y="798" width="1" height="9" fill="#fff"/>
<polygon points="497.5,797.5 497.5,807.5 502.5,802.5" fill="#00a000" stroke="#fff" stroke-width="1"/>
<path d="M57 804h1v2h1v2h-3v-2h1z" fill="#fff078"/>
<path d="M173 804h1v2h1v2h-3v-2h1z" fill="#fff078"/>
<text class="s" x="526.3" y="805" textLength="96" lengthAdjust="spacingAndGlyphs" dy="0 0 0 0 0 0 0 0 0 -1 1">UniRef100_O65766</text>
<path d="M10 812H19v3H10zM502 812H527v3H502z" fill="#000033"/>
<path d="M19 812h147v3h-147zM168 812h329v3h-329z" fill="#00a000"/>
<path d="M166 813h2v1h-2z" fill="#00a000"/>
<rect x="19" y="809" width="1" height="9" fill="#fff"/>
<polygon points="497.5,808.5 497.5,818.5 502.5,813.5" fill="#00a000" stroke="#fff" stroke-width="1"/>
<text class="s" x="526.3" y="816" textLength="96" lengthAdjust="spacingAndGlyphs" dy="0 0 0 0 0 0 0 0 0 -1 1">UniRef100_Q8ITB1</text>
<path d="M25 823h12v3h-12zM42 823h455v3h-455z" fill="#00a000"/>
<path d="M37 824h5v1h-5z" fill="#00a000"/>
<rect x="25" y="820" width="1" height="9" fill="#fff"/>
<polygon points="497.5,819.5 497.5,829.5 502.5,824.5" fill="#00a000" stroke="#fff" stroke-width="1"/>
<path d="M55 826h1v2h1v2h-3v-2h1z" fill="#fff078"/>
<text class="s" x="526.3" y="827" textLength="96" lengthAdjust="spacingAndGlyphs" dy="0 0 0 0 0 0 0 0 0 -1 1">UniRef100_Q0U3N8</text>
<path d="M10 834H16v3H10zM502 834H527v3H502z" fill="#000033"/>
<path d="M16 834h16v3h-16zM37 834h129v3h-129zM168 834h329v3h-329z" fill="#00a000"/>
<path d="M32 835h5v1h-5zM166 835h2v1h-2z" fill="#00a000"/>
<rect x="16" y="831" width="1" height="9" fill="#fff"/>
<polygon points="497.5,830.5 497.5,840.5 502.5,835.5" fill="#00a000" stroke="#fff" stroke-width="1"/>
<text class="s" x="526.3" y="838" textLength="96" lengthAdjust="spacingAndGlyphs" dy="0 0 0 0 0 0 0 0 0 -1 1">UniRef100_B0WHB4</text>
<path d="M16 845h14v3h-14zM36 845h128v3h-128zM166 845h331v3h-331z" fill="#00a000"/>
<path d="M30 846h6v1h-6zM164 846h2v1h-2z" fill="#00a000"/>
<rect x="16" y="842" width="1" height="9" fill="#fff"/>
<polygon points="497.5,841.5 497.5,851.5 502.5,846.5" fill="#00a000" stroke="#fff" stroke-width="1"/>
<text class="s" x="526.3" y="849" textLength="96" lengthAdjust="spacingAndGlyphs" dy="0 0 0 0 0 0 0 0 0 -1 1">UniRef100_Q4GXS7</text>
<path d="M10 856H25v3H10zM502 856H527v3H502z" fill="#000033"/>
<path d="M25 856h12v3h-12zM42 856h6v3h-6zM53 856h125v3h-125zM180 856h317v3h-317z" fill="#00a000"/>
<path d="M37 857h5v1h-5zM48 857h5v1h-5zM178 857h2v1h-2z" fill="#00a000"/>
<rect x="25" y="853" width="1" height="9" fill="#fff"/>
<polygon points="497.5,852.5 497.5,862.5 502.5,857.5" fill="#00a000" stroke="#fff" stroke-width="1"/>
<text class="s" x="526.3" y="860" textLength="96" lengthAdjust="spacingAndGlyphs" dy="0 0 0 0 0 0 0 0 0 -1 1">UniRef100_C4R146</text>
<path d="M25 867h12v3h-12zM42 867h455v3h-455z" fill="#00a000"/>
<path d="M37 868h5v1h-5z" fill="#00a000"/>
<rect x="25" y="864" width="1" height="9" fill="#fff"/>
<polygon points="497.5,863.5 497.5,873.5 502.5,868.5" fill="#00a000" stroke="#fff" stroke-width="1"/>
<path d="M55 870h1v2h1v2h-3v-2h1z" fill="#fff078"/>
<text class="s" x="526.3" y="871" textLength="96" lengthAdjust="spacingAndGlyphs" dy="0 0 0 0 0 0 0 0 0 -1 1">UniRef100_B2WMJ4</text>
<path d="M10 878H16v3H10zM502 878H527v3H502z" fill="#000033"/>
<path d="M16 878h16v3h-16zM37 878h136v3h-136zM175 878h322v3h-322z" fill="#00a000"/>
<path d="M32 879h5v1h-5zM173 879h2v1h-2z" fill="#00a000"/>
<rect x="16" y="875" width="1" height="9" fill="#fff"/>
<polygon points="497.5,874.5 497.5,884.5 502.5,879.5" fill="#00a000" stroke="#fff" stroke-width="1"/>
<text class="s" x="526.3" y="882" textLength="96" lengthAdjust="spacingAndGlyphs" dy="0 0 0 0 0 0 0 0 0 -1 1">UniRef100_Q06DG7</text>
<path d="M25 889h12v3h-12zM42 889h6v3h-6zM53 889h125v3h-125zM180 889h317v3h-317z" fill="#00a000"/>
<path d="M37 890h5v1h-5zM48 890h5v1h-5zM178 890h2v1h-2z" fill="#00a000"/>
<rect x="25" y="886" width="1" height="9" fill="#fff"/>
<polygon points="497.5,885.5 497.5,895.5 502.5,890.5" fill="#00a000" stroke="#fff" stroke-width="1"/>
<text class="s" x="526.3" y="893" textLength="96" lengthAdjust="spacingAndGlyphs" dy="0 0 0 0 0 0 0 0 0 -1 1">UniRef100_B9WH22</text>
<path d="M10 900H16v3H10zM502 900H527v3H502z" fill="#000033"/>
<path d="M16 900h150v3h-150zM168 900h329v3h-329z" fill="#00a000"/>
<path d="M166 901h2v1h-2z" fill="#00a000"/>
<rect x="16" y="897" width="1" height="9" fill="#fff"/>
<polygon points="497.5,896.5 497.5,906.5 502.5,901.5" fill="#00a000" stroke="#fff" stroke-width="1"/>
<text class="s" x="526.3" y="904" textLength="108" lengthAdjust="spacingAndGlyphs" dy="0 0 0 0 0 0 0 0 0 -1 1">UniRef100_UPI000..</text>
<path d="M16 911h28v3h-28zM49 911h115v3h-115zM166 911h322v3h-322z" fill="#00a000"/>
<path d="M44 912h5v1h-5zM164 912h2v1h-2z" fill="#00a000"/>
<rect x="16" y="908" width="1" height="9" fill="#fff"/>
<polygon points="488.5,907.5 488.5,917.5 493.5,912.5" fill="#00a000" stroke="#fff" stroke-width="1"/>
<text class="s" x="526.3" y="915" textLength="96" lengthAdjust="spacingAndGlyphs" dy="0 0 0 0 0 0 0 0 0 -1 1">UniRef100_Q6EUZ3</text>
<path d="M10 922H25v3H10zM502 922H527v3H502z" fill="#000033"/>
<path d="M25 922h12v3h-12zM42 922h11v3h-11zM55 922h123v3h-123zM180 922h317v3h-317z" fill="#00c8c8"/>
<path d="M37 923h5v1h-5zM53 923h2v1h-2zM178 923h2v1h-2z" fill="#00c8c8"/>
<rect x="25" y="919" width="1" height="9" fill="#fff"/>
<polygon points="497.5,918.5 497.5,928.5 502.5,923.5" fill="#00c8c8" stroke="#fff" stroke-width="1"/>
<text class="s" x="526.3" y="926" textLength="96" lengthAdjust="spacingAndGlyphs" dy="0 0 0 0 0 0 0 0 0 -1 1">UniRef100_Q6BPH9</text>
<path d="M25 933h12v3h-12zM42 933h11v3h-11zM55 933h442v3h-442z" fill="#00a000"/>
<path d="M37 934h5v1h-5zM53 934h2v1h-2z" fill="#00a000"/>
<rect x="25" y="930" width="1" height="9" fill="#fff"/>
<polygon points="497.5,929.5 497.5,939.5 502.5,934.5" fill="#00a000" stroke="#fff" stroke-width="1"/>
<text class="s" x="526.3" y="937" textLength="96" lengthAdjust="spacingAndGlyphs" dy="0 0 0 0 0 0 0 0 0 -1 1">UniRef100_C5DEB4</text>
<path d="M10 944H16v3H10zM502 944H527v3H502z" fill="#000033"/>
<path d="M16 944h16v3h-16zM37 944h129v3h-129zM168 944h329v3h-329z" fill="#00a000"/>
<path d="M32 945h5v1h-5zM166 945h2v1h-2z" fill="#00a000"/>
<rect x="16" y="941" width="1" height="9" fill="#fff"/>
<polygon points="497.5,940.5 497.5,950.5 502.5,945.5" fill="#00a000" stroke="#fff" stroke-width="1"/>
<text class="s" x="526.3" y="948" textLength="96" lengthAdjust="spacingAndGlyphs" dy="0 0 0 0 0 0 0 0 0 -1 1">UniRef100_Q9GSB1</text>
<path d="M16 955h16v3h-16zM36 955h461v3h-461z" fill="#00a000"/>
<path d="M32 956h4v1h-4z" fill="#00a000"/>
<rect x="16" y="952" width="1" height="9" fill="#fff"/>
<polygon points="497.5,951.5 497.5,961.5 502.5,956.5" fill="#00a000" stroke="#fff" stroke-width="1"/>
<path d="M48 958h1v2h1v2h-3v-2h1z" fill="#fff078"/>
<path d="M169 958h1v2h1v2h-3v-2h1z" fill="#fff078"/>
<text class="s" x="526.3" y="959" textLength="96" lengthAdjust="spacingAndGlyphs" dy="0 0 0 0 0 0 0 0 0 -1 1">UniRef100_Q22B78</text>
<path d="M10 966H25v3H10zM502 966H527v3H502z" fill="#000033"/>
<path d="M25 966h472v3h-472z" fill="#00a000"/>
<rect x="25" y="963" width="1" height="9" fill="#fff"/>
<polygon points="497.5,962.5 497.5,972.5 502.5,967.5" fill="#00a000" stroke="#fff" stroke-width="1"/>
<text class="s" x="526.3" y="970" textLength="96" lengthAdjust="spacingAndGlyphs" dy="0 0 0 0 0 0 0 0 0 -1 1">UniRef100_B6HCL7</text>
<path d="M16 977h16v3h-16zM36 977h127v3h-127zM165 977h332v3h-332z" fill="#00a000"/>
<path d="M32 978h4v1h-4zM163 978h2v1h-2z" fill="#00a000"/>
<rect x="16" y="974" width="1" height="9" fill="#fff"/>
<polygon points="497.5,973.5 497.5,983.5 502.5,978.5" fill="#00a000" stroke="#fff" stroke-width="1"/>
<path d="M48 980h1v2h1v2h-3v-2h1z" fill="#fff078"/>
<text class="s" x="526.3" y="981" textLength="96" lengthAdjust="spacingAndGlyphs" dy="0 0 0 0 0 0 0 0 0 -1 1">UniRef100_Q56FI3</text>
<path d="M10 988H16v3H10zM502 988H527v3H502z" fill="#000033"/>
<path d="M16 988h14v3h-14zM34 988h129v3h-129zM165 988h332v3h-332z" fill="#00a000"/>
<path d="M30 989h4v1h-4zM163 989h2v1h-2z" fill="#00a000"/>
<rect x="16" y="985" width="1" height="9" fill="#fff"/>
<polygon points="497.5,984.5 497.5,994.5 502.5,989.5" fill="#00a000" stroke="#fff" stroke-width="1"/>
<path d="M51 991h1v2h1v2h-3v-2h1z" fill="#fff078"/>
<text class="s" x="526.3" y="992" textLength="96" lengthAdjust="spacingAndGlyphs" dy="0 0 0 0 0 0 0 0 0 -1 1">UniRef100_Q98TH5</text>
<path d="M16 999h11v3h-11zM32 999h131v3h-131zM165 999h332v3h-332z" fill="#00a000"/>
<path d="M27 1000h5v1h-5zM163 1000h2v1h-2z" fill="#00a000"/>
<rect x="16" y="996" width="1" height="9" fill="#fff"/>
<polygon points="497.5,995.5 497.5,1005.5 502.5,1000.5" fill="#00a000" stroke="#fff" stroke-width="1"/>
<text class="s" x="526.3" y="1003" textLength="96" lengthAdjust="spacingAndGlyphs" dy="0 0 0 0 0 0 0 0 0 -1 1">UniRef100_Q5MGJ8</text>
<path d="M10 1010H16v3H10zM502 1010H527v3H502z" fill="#000033"/>
<path d="M16 1010h11v3h-11zM43 1010h454v3h-454z" fill="#00a000"/>
<path d="M27 1011h16v1h-16z" fill="#00a000"/>
<rect x="16" y="1007" width="1" height="9" fill="#fff"/>
<polygon points="497.5,1006.5 497.5,1016.5 502.5,1011.5" fill="#00a000" stroke="#fff" stroke-width="1"/>
<text class="s" x="526.3" y="1014" textLength="96" lengthAdjust="spacingAndGlyphs" dy="0 0 0 0 0 0 0 0 0 -1 1">UniRef100_C4Q666</text>
<path d="M16 1021h16v3h-16zM37 1021h127v3h-127zM166 1021h331v3h-331z" fill="#00a000"/>
<path d="M32 1022h5v1h-5zM164 1022h2v1h-2z" fill="#00a000"/>
<rect x="16" y="1018" width="1" height="9" fill="#fff"/>
<polygon points="497.5,1017.5 497.5,1027.5 502.5,1022.5" fill="#00a000" stroke="#fff" stroke-width="1"/>
<text class="s" x="526.3" y="1025" textLength="96" lengthAdjust="spacingAndGlyphs" dy="0 0 0 0 0 0 0 0 0 -1 1">UniRef100_B5AKB3</text>
<path d="M10 1032H25v3H10zM502 1032H527v3H502z" fill="#000033"/>
<path d="M25 1032h12v3h-12zM42 1032h11v3h-11zM55 1032h442v3h-442z" fill="#00a000"/>
<path d="M37 1033h5v1h-5zM53 1033h2v1h-2z" fill="#00a000"/>
<rect x="25" y="1029" width="1" height="9" fill="#fff"/>
<polygon points="497.5,1028.5 497.5,1038.5 502.5,1033.5" fill="#00a000" stroke="#fff" stroke-width="1"/>
<text class="s" x="526.3" y="1036" textLength="96" lengthAdjust="spacingAndGlyphs" dy="0 0 0 0 0 0 0 0 0 -1 1">UniRef100_Q6C0Z7</text>
<path d="M16 1043h15v3h-15zM35 1043h128v3h-128zM165 1043h332v3h-332z" fill="#00a000"/>
<path d="M31 1044h4v1h-4zM163 1044h2v1h-2z" fill="#00a000"/>
<rect x="16" y="1040" width="1" height="9" fill="#fff"/>
<polygon points="497.5,1039.5 497.5,1049.5 502.5,1044.5" fill="#00a000" stroke="#fff" stroke-width="1"/>
<path d="M51 1046h1v2h1v2h-3v-2h1z" fill="#fff078"/>
<text class="s" x="526.3" y="1047" textLength="96" lengthAdjust="spacingAndGlyphs" dy="0 0 0 0 0 0 0 0 0 -1 1">UniRef100_P62280</text>
<path d="M10 1054H16v3H10zM502 1054H527v3H502z" fill="#000033"/>
<path d="M16 1054h15v3h-15zM35 1054h128v3h-128zM165 1054h332v3h-332z" fill="#00a000"/>
<path d="M31 1055h4v1h-4zM163 1055h2v1h-2z" fill="#00a000"/>
<rect x="16" y="1051" width="1" height="9" fill="#fff"/>
<polygon points="497.5,1050.5 497.5,1060.5 502.5,1055.5" fill="#00a000" stroke="#fff" stroke-width="1"/>
<path d="M51 1057h1v2h1v2h-3v-2h1z" fill="#fff078"/>
<text class="s" x="526.3" y="1058" textLength="96" lengthAdjust="spacingAndGlyphs" dy="0 0 0 0 0 0 0 0 0 -1 1">UniRef100_Q5UAN3</text>
<path d="M16 1065h15v3h-15zM35 1065h131v3h-131zM168 1065h329v3h-329z" fill="#00a000"/>
<path d="M31 1066h4v1h-4zM166 1066h2v1h-2z" fill="#00a000"/>
<rect x="16" y="1062" width="1" height="9" fill="#fff"/>
<polygon points="497.5,1061.5 497.5,1071.5 502.5,1066.5" fill="#00a000" stroke="#fff" stroke-width="1"/>
<path d="M46 1068h1v2h1v2h-3v-2h1z" fill="#fff078"/>
<text class="s" x="526.3" y="1069" textLength="96" lengthAdjust="spacingAndGlyphs" dy="0 0 0 0 0 0 0 0 0 -1 1">UniRef100_Q4KTD1</text>
<path d="M10 1076H16v3H10zM502 1076H527v3H502z" fill="#000033"/>
<path d="M16 1076h25v3h-25zM50 1076h113v3h-113zM165 1076h332v3h-332z" fill="#00a000"/>
<path d="M41 1077h9v1h-9zM163 1077h2v1h-2z" fill="#00a000"/>
<rect x="16" y="1073" width="1" height="9" fill="#fff"/>
<polygon points="497.5,1072.5 497.5,1082.5 502.5,1077.5" fill="#00a000" stroke="#fff" stroke-width="1"/>
<path d="M33 1079h1v2h1v2h-3v-2h1z" fill="#fff078"/>
<text class="s" x="526.3" y="1080" textLength="96" lengthAdjust="spacingAndGlyphs" dy="0 0 0 0 0 0 0 0 0 -1 1">UniRef100_C6KI60</text>
<path d="M16 1087h15v3h-15zM35 1087h128v3h-128zM165 1087h332v3h-332z" fill="#00a000"/>
<path d="M31 1088h4v1h-4zM163 1088h2v1h-2z" fill="#00a000"/>
<rect x="16" y="1084" width="1" height="9" fill="#fff"/>
<polygon points="497.5,1083.5 497.5,1093.5 502.5,1088.5" fill="#00a000" stroke="#fff" stroke-width="1"/>
<path d="M51 1090h1v2h1v2h-3v-2h1z" fill="#fff078"/>
<text class="s" x="526.3" y="1091" textLength="96" lengthAdjust="spacingAndGlyphs" dy="0 0 0 0 0 0 0 0 0 -1 1">UniRef100_B0Z9Q3</text>
<path d="M10 1098H16v3H10zM502 1098H527v3H502z" fill="#000033"/>
<path d="M16 1098h11v3h-11zM32 1098h131v3h-131zM165 1098h332v3h-332z" fill="#00a000"/>
<path d="M27 1099h5v1h-5zM163 1099h2v1h-2z" fill="#00a000"/>
<rect x="16" y="1095" width="1" height="9" fill="#fff"/>
<polygon points="497.5,1094.5 497.5,1104.5 502.5,1099.5" fill="#00a000" stroke="#fff" stroke-width="1"/>
<path d="M51 1101h1v2h1v2h-3v-2h1z" fill="#fff078"/>
<text class="s" x="526.3" y="1102" textLength="96" lengthAdjust="spacingAndGlyphs" dy="0 0 0 0 0 0 0 0 0 -1 1">UniRef100_A8UAD5</text>
<path d="M16 1109h15v3h-15zM35 1109h428v3h-428z" fill="#00c8c8"/>
<path d="M31 1110h4v1h-4z" fill="#00c8c8"/>
<rect x="16" y="1106" width="1" height="9" fill="#fff"/>
<polygon points="463.5,1105.5 463.5,1115.5 468.5,1110.5" fill="#00c8c8" stroke="#fff" stroke-width="1"/>
<path d="M48 1112h1v2h1v2h-3v-2h1z" fill="#fff078"/>
<text class="s" x="526.3" y="1113" textLength="96" lengthAdjust="spacingAndGlyphs" dy="0 0 0 0 0 0 0 0 0 -1 1">UniRef100_A0DH92</text>
<path d="M10 1120H25v3H10zM502 1120H527v3H502z" fill="#000033"/>
<path d="M25 1120h12v3h-12zM42 1120h11v3h-11zM55 1120h123v3h-123zM180 1120h317v3h-317z" fill="#00c8c8"/>
<path d="M37 1121h5v1h-5zM53 1121h2v1h-2zM178 1121h2v1h-2z" fill="#00c8c8"/>
<rect x="25" y="1117" width="1" height="9" fill="#fff"/>
<polygon points="497.5,1116.5 497.5,1126.5 502.5,1121.5" fill="#00c8c8" stroke="#fff" stroke-width="1"/>
<text class="s" x="526.3" y="1124" textLength="96" lengthAdjust="spacingAndGlyphs" dy="0 0 0 0 0 0 0 0 0 -1 1">UniRef100_A3LR50</text>
<path d="M16 1131h16v3h-16zM37 1131h126v3h-126zM165 1131h332v3h-332z" fill="#00a000"/>
<path d="M32 1132h5v1h-5zM163 1132h2v1h-2z" fill="#00a000"/>
<rect x="16" y="1128" width="1" height="9" fill="#fff"/>
<polygon points="497.5,1127.5 497.5,1137.5 502.5,1132.5" fill="#00a000" stroke="#fff" stroke-width="1"/>
<path d="M46 1134h1v2h1v2h-3v-2h1z" fill="#fff078"/>
<text class="s" x="526.3" y="1135" textLength="96" lengthAdjust="spacingAndGlyphs" dy="0 0 0 0 0 0 0 0 0 -1 1">UniRef100_Q292D0</text>
<path d="M10 1142H16v3H10zM502 1142H527v3H502z" fill="#000033"/>
<path d="M16 1142h15v3h-15zM35 1142h128v3h-128zM165 1142h332v3h-332z" fill="#00a000"/>
<path d="M31 1143h4v1h-4zM163 1143h2v1h-2z" fill="#00a000"/>
<rect x="16" y="1139" width="1" height="9" fill="#fff"/>
<polygon points="497.5,1138.5 497.5,1148.5 502.5,1143.5" fill="#00a000" stroke="#fff" stroke-width="1"/>
<path d="M51 1145h1v2h1v2h-3v-2h1z" fill="#fff078"/>
<text class="s" x="526.3" y="1146" textLength="96" lengthAdjust="spacingAndGlyphs" dy="0 0 0 0 0 0 0 0 0 -1 1">UniRef100_Q7SZ77</text>
<path d="M16 1153h15v3h-15zM35 1153h128v3h-128zM165 1153h332v3h-332z" fill="#00a000"/>
<path d="M31 1154h4v1h-4zM163 1154h2v1h-2z" fill="#00a000"/>
<rect x="16" y="1150" width="1" height="9" fill="#fff"/>
<polygon points="497.5,1149.5 497.5,1159.5 502.5,1154.5" fill="#00a000" stroke="#fff" stroke-width="1"/>
<path d="M51 1156h1v2h1v2h-3v-2h1z" fill="#fff078"/>
<text class="s" x="526.3" y="1157" textLength="96" lengthAdjust="spacingAndGlyphs" dy="0 0 0 0 0 0 0 0 0 -1 1">UniRef100_B5FX82</text>
<path d="M10 1164H16v3H10zM502 1164H527v3H502z" fill="#000033"/>
<path d="M16 1164h15v3h-15zM35 1164h3v3h-3zM42 1164h121v3h-121zM165 1164h332v3h-332z" fill="#00a000"/>
<path d="M31 1165h4v1h-4zM38 1165h4v1h-4zM163 1165h2v1h-2z" fill="#00a000"/>
<rect x="16" y="1161" width="1" height="9" fill="#fff"/>
<polygon points="497.5,1160.5 497.5,1170.5 502.5,1165.5" fill="#00a000" stroke="#fff" stroke-width="1"/>
<text class="s" x="526.3" y="1168" textLength="96" lengthAdjust="spacingAndGlyphs" dy="0 0 0 0 0 0 0 0 0 -1 1">UniRef100_Q95P67</text>
<path d="M16 1175h148v3h-148zM166 1175h331v3h-331z" fill="#00a000"/>
<path d="M164 1176h2v1h-2z" fill="#00a000"/>
<rect x="16" y="1172" width="1" height="9" fill="#fff"/>
<polygon points="497.5,1171.5 497.5,1181.5 502.5,1176.5" fill="#00a000" stroke="#fff" stroke-width="1"/>
<text class="s" x="526.3" y="1179" textLength="96" lengthAdjust="spacingAndGlyphs" dy="0 0 0 0 0 0 0 0 0 -1 1">UniRef100_A7RL80</text>
<path d="M10 1186H16v3H10zM468 1186H527v3H468z" fill="#000033"/>
<path d="M16 1186h15v3h-15zM34 1186h429v3h-429z" fill="#00c8c8"/>
<path d="M31 1187h3v1h-3z" fill="#00c8c8"/>
<rect x="16" y="1183" width="1" height="9" fill="#fff"/>
<polygon points="463.5,1182.5 463.5,1192.5 468.5,1187.5" fill="#00c8c8" stroke="#fff" stroke-width="1"/>
<path d="M48 1189h1v2h1v2h-3v-2h1z" fill="#fff078"/>
<text class="s" x="526.3" y="1190" textLength="96" lengthAdjust="spacingAndGlyphs" dy="0 0 0 0 0 0 0 0 0 -1 1">UniRef100_A0D0D6</text>
<path d="M16 1197h18v3h-18zM36 1197h128v3h-128zM166 1197h331v3h-331z" fill="#00a000"/>
<path d="M34 1198h2v1h-2zM164 1198h2v1h-2z" fill="#00a000"/>
<rect x="16" y="1194" width="1" height="9" fill="#fff"/>
<polygon points="497.5,1193.5 497.5,1203.5 502.5,1198.5" fill="#00a000" stroke="#fff" stroke-width="1"/>
<text class="s" x="526.3" y="1201" textLength="96" lengthAdjust="spacingAndGlyphs" dy="0 0 0 0 0 0 0 0 0 -1 1">UniRef100_Q5KNH2</text>
<path d="M10 1208H16v3H10zM502 1208H527v3H502z" fill="#000033"/>
<path d="M16 1208h15v3h-15zM35 1208h128v3h-128zM165 1208h332v3h-332z" fill="#00a000"/>
<path d="M31 1209h4v1h-4zM163 1209h2v1h-2z" fill="#00a000"/>
<rect x="16" y="1205" width="1" height="9" fill="#fff"/>
<polygon points="497.5,1204.5 497.5,1214.5 502.5,1209.5" fill="#00a000" stroke="#fff" stroke-width="1"/>
<path d="M51 1211h1v2h1v2h-3v-2h1z" fill="#fff078"/>
<text class="s" x="526.3" y="1212" textLength="96" lengthAdjust="spacingAndGlyphs" dy="0 0 0 0 0 0 0 0 0 -1 1">UniRef100_P41115</text>
<path d="M16 1219h15v3h-15zM35 1219h128v3h-128zM165 1219h332v3h-332z" fill="#00a000"/>
<path d="M31 1220h4v1h-4zM163 1220h2v1h-2z" fill="#00a000"/>
<rect x="16" y="1216" width="1" height="9" fill="#fff"/>
<polygon points="497.5,1215.5 497.5,1225.5 502.5,1220.5" fill="#00a000" stroke="#fff" stroke-width="1"/>
<path d="M51 1222h1v2h1v2h-3v-2h1z" fill="#fff078"/>
<text class="s" x="526.3" y="1223" textLength="108" lengthAdjust="spacingAndGlyphs" dy="0 0 0 0 0 0 0 0 0 -1 1">UniRef100_UPI000..</text>
<path d="M10 1230H16v3H10zM502 1230H527v3H502z" fill="#000033"/>
<path d="M16 1230h16v3h-16zM37 1230h126v3h-126zM165 1230h332v3h-332z" fill="#00a000"/>
<path d="M32 1231h5v1h-5zM163 1231h2v1h-2z" fill="#00a000"/>
<rect x="16" y="1227" width="1" height="9" fill="#fff"/>
<polygon points="497.5,1226.5 497.5,1236.5 502.5,1231.5" fill="#00a000" stroke="#fff" stroke-width="1"/>
<text class="s" x="526.3" y="1234" textLength="96" lengthAdjust="spacingAndGlyphs" dy="0 0 0 0 0 0 0 0 0 -1 1">UniRef100_Q66SW3</text>
<path d="M16 1241h16v3h-16zM37 1241h136v3h-136zM175 1241h322v3h-322z" fill="#00a000"/>
<path d="M32 1242h5v1h-5zM173 1242h2v1h-2z" fill="#00a000"/>
<rect x="16" y="1238" width="1" height="9" fill="#fff"/>
<polygon points="497.5,1237.5 497.5,1247.5 502.5,1242.5" fill="#00a000" stroke="#fff" stroke-width="1"/>
<text class="s" x="526.3" y="1245" textLength="96" lengthAdjust="spacingAndGlyphs" dy="0 0 0 0 0 0 0 0 0 -1 1">UniRef100_B6DDS6</text>
<path d="M10 1252H13v3H10zM502 1252H527v3H502z" fill="#000033"/>
<path d="M13 1252h17v3h-17zM35 1252h127v3h-127zM164 1252h333v3h-333z" fill="#00a000"/>
<path d="M30 1253h5v1h-5zM162 1253h2v1h-2z" fill="#00a000"/>
<rect x="13" y="1249" width="1" height="9" fill="#fff"/>
<polygon points="497.5,1248.5 497.5,1258.5 502.5,1253.5" fill="#00a000" stroke="#fff" stroke-width="1"/>
<path d="M44 1255h1v2h1v2h-3v-2h1z" fill="#fff078"/>
<text class="s" x="526.3" y="1256" textLength="96" lengthAdjust="spacingAndGlyphs" dy="0 0 0 0 0 0 0 0 0 -1 1">UniRef100_B4LJS1</text>
<path d="M13 1263h29v3h-29zM47 1263h115v3h-115zM164 1263h333v3h-333z" fill="#00a000"/>
<path d="M42 1264h5v1h-5zM162 1264h2v1h-2z" fill="#00a000"/>
<rect x="13" y="1260" width="1" height="9" fill="#fff"/>
<polygon points="497.5,1259.5 497.5,1269.5 502.5,1264.5" fill="#00a000" stroke="#fff" stroke-width="1"/>
<text class="s" x="526.3" y="1267" textLength="96" lengthAdjust="spacingAndGlyphs" dy="0 0 0 0 0 0 0 0 0 -1 1">UniRef100_A6YPG5</text>
<path d="M10 1274H16v3H10zM468 1274H527v3H468z" fill="#000033"/>
<path d="M16 1274h15v3h-15zM34 1274h429v3h-429z" fill="#00c8c8"/>
<path d="M31 1275h3v1h-3z" fill="#00c8c8"/>
<rect x="16" y="1271" width="1" height="9" fill="#fff"/>
<polygon points="463.5,1270.5 463.5,1280.5 468.5,1275.5" fill="#00c8c8" stroke="#fff" stroke-width="1"/>
<path d="M48 1277h1v2h1v2h-3v-2h1z" fill="#fff078"/>
<text class="s" x="526.3" y="1278" textLength="96" lengthAdjust="spacingAndGlyphs" dy="0 0 0 0 0 0 0 0 0 -1 1">UniRef100_A0D4V2</text>
<path d="M16 1285h30v3h-30zM48 1285h430v3h-430z" fill="#00a000"/>
<path d="M46 1286h2v1h-2z" fill="#00a000"/>
<rect x="16" y="1282" width="1" height="9" fill="#fff"/>
<polygon points="478.5,1281.5 478.5,1291.5 483.5,1286.5" fill="#00a000" stroke="#fff" stroke-width="1"/>
<text class="s" x="526.3" y="1289" textLength="96" lengthAdjust="spacingAndGlyphs" dy="0 0 0 0 0 0 0 0 0 -1 1">UniRef100_B8P8P5</text>
<path d="M10 1296H16v3H10zM502 1296H527v3H502z" fill="#000033"/>
<path d="M16 1296h30v3h-30zM48 1296h115v3h-115zM165 1296h332v3h-332z" fill="#00a000"/>
<path d="M46 1297h2v1h-2zM163 1297h2v1h-2z" fill="#00a000"/>
<rect x="16" y="1293" width="1" height="9" fill="#fff"/>
<polygon points="497.5,1292.5 497.5,1302.5 502.5,1297.5" fill="#00a000" stroke="#fff" stroke-width="1"/>
<text class="s" x="526.3" y="1300" textLength="96" lengthAdjust="spacingAndGlyphs" dy="0 0 0 0 0 0 0 0 0 -1 1">UniRef100_A8N1E9</text>
<path d="M16 1307h15v3h-15zM35 1307h128v3h-128zM165 1307h332v3h-332z" fill="#00a000"/>
<path d="M31 1308h4v1h-4zM163 1308h2v1h-2z" fill="#00a000"/>
<rect x="16" y="1304" width="1" height="9" fill="#fff"/>
<polygon points="497.5,1303.5 497.5,1313.5 502.5,1308.5" fill="#00a000" stroke="#fff" stroke-width="1"/>
<path d="M51 1310h1v2h1v2h-3v-2h1z" fill="#fff078"/>
<text class="s" x="526.3" y="1311" textLength="108" lengthAdjust="spacingAndGlyphs" dy="0 0 0 0 0 0 0 0 0 -1 1">UniRef100_UPI000..</text>
<path d="M10 1318H16v3H10zM502 1318H527v3H502z" fill="#000033"/>
<path d="M16 1318h11v3h-11zM32 1318h132v3h-132zM166 1318h331v3h-331z" fill="#00a000"/>
<path d="M27 1319h5v1h-5zM164 1319h2v1h-2z" fill="#00a000"/>
<rect x="16" y="1315" width="1" height="9" fill="#fff"/>
<polygon points="497.5,1314.5 497.5,1324.5 502.5,1319.5" fill="#00a000" stroke="#fff" stroke-width="1"/>
<text class="s" x="526.3" y="1322" textLength="96" lengthAdjust="spacingAndGlyphs" dy="0 0 0 0 0 0 0 0 0 -1 1">UniRef100_B2YI13</text>
<path d="M16 1329h15v3h-15zM35 1329h131v3h-131zM168 1329h329v3h-329z" fill="#00a000"/>
<path d="M31 1330h4v1h-4zM166 1330h2v1h-2z" fill="#00a000"/>
<rect x="16" y="1326" width="1" height="9" fill="#fff"/>
<polygon points="497.5,1325.5 497.5,1335.5 502.5,1330.5" fill="#00a000" stroke="#fff" stroke-width="1"/>
<path d="M51 1332h1v2h1v2h-3v-2h1z" fill="#fff078"/>
<text class="s" x="526.3" y="1333" textLength="96" lengthAdjust="spacingAndGlyphs" dy="0 0 0 0 0 0 0 0 0 -1 1">UniRef100_A8E6B0</text>
<path d="M10 1340H25v3H10zM502 1340H527v3H502z" fill="#000033"/>
<path d="M25 1340h12v3h-12zM42 1340h11v3h-11zM55 1340h442v3h-442z" fill="#00a000"/>
<path d="M37 1341h5v1h-5zM53 1341h2v1h-2z" fill="#00a000"/>
<rect x="25" y="1337" width="1" height="9" fill="#fff"/>
<polygon points="497.5,1336.5 497.5,1346.5 502.5,1341.5" fill="#00a000" stroke="#fff" stroke-width="1"/>
<text class="s" x="526.3" y="1344" textLength="96" lengthAdjust="spacingAndGlyphs" dy="0 0 0 0 0 0 0 0 0 -1 1">UniRef100_Q6CX80</text>
<path d="M16 1351h15v3h-15zM35 1351h4v3h-4zM41 1351h125v3h-125zM168 1351h329v3h-329z" fill="#00a000"/>
<path d="M31 1352h4v1h-4zM39 1352h2v1h-2zM166 1352h2v1h-2z" fill="#00a000"/>
<rect x="16" y="1348" width="1" height="9" fill="#fff"/>
<polygon points="497.5,1347.5 497.5,1357.5 502.5,1352.5" fill="#00a000" stroke="#fff" stroke-width="1"/>
<text class="s" x="526.3" y="1355" textLength="96" lengthAdjust="spacingAndGlyphs" dy="0 0 0 0 0 0 0 0 0 -1 1">UniRef100_Q4GXS8</text>
<path d="M10 1362H16v3H10zM502 1362H527v3H502z" fill="#000033"/>
<path d="M16 1362h16v3h-16zM37 1362h136v3h-136zM175 1362h322v3h-322z" fill="#00a000"/>
<path d="M32 1363h5v1h-5zM173 1363h2v1h-2z" fill="#00a000"/>
<rect x="16" y="1359" width="1" height="9" fill="#fff"/>
<polygon points="497.5,1358.5 497.5,1368.5 502.5,1363.5" fill="#00a000" stroke="#fff" stroke-width="1"/>
<text class="s" x="526.3" y="1366" textLength="96" lengthAdjust="spacingAndGlyphs" dy="0 0 0 0 0 0 0 0 0 -1 1">UniRef100_P52812</text>
<path d="M16 1373h15v3h-15zM35 1373h128v3h-128zM165 1373h332v3h-332z" fill="#00a000"/>
<path d="M31 1374h4v1h-4zM163 1374h2v1h-2z" fill="#00a000"/>
<rect x="16" y="1370" width="1" height="9" fill="#fff"/>
<polygon points="497.5,1369.5 497.5,1379.5 502.5,1374.5" fill="#00a000" stroke="#fff" stroke-width="1"/>
<path d="M51 1376h1v2h1v2h-3v-2h1z" fill="#fff078"/>
<text class="s" x="526.3" y="1377" textLength="108" lengthAdjust="spacingAndGlyphs" dy="0 0 0 0 0 0 0 0 0 -1 1">UniRef100_UPI000..</text>
<path d="M10 1384H16v3H10zM502 1384H527v3H502z" fill="#000033"/>
<path d="M16 1384h15v3h-15zM35 1384h128v3h-128zM165 1384h332v3h-332z" fill="#00a000"/>
<path d="M31 1385h4v1h-4zM163 1385h2v1h-2z" fill="#00a000"/>
<rect x="16" y="1381" width="1" height="9" fill="#fff"/>
<polygon points="497.5,1380.5 497.5,1390.5 502.5,1385.5" fill="#00a000" stroke="#fff" stroke-width="1"/>
<path d="M51 1387h1v2h1v2h-3v-2h1z" fill="#fff078"/>
<text class="s" x="526.3" y="1388" textLength="108" lengthAdjust="spacingAndGlyphs" dy="0 0 0 0 0 0 0 0 0 -1 1">UniRef100_UPI000..</text>
<path d="M16 1395h15v3h-15zM35 1395h128v3h-128zM165 1395h332v3h-332z" fill="#00a000"/>
<path d="M31 1396h4v1h-4zM163 1396h2v1h-2z" fill="#00a000"/>
<rect x="16" y="1392" width="1" height="9" fill="#fff"/>
<polygon points="497.5,1391.5 497.5,1401.5 502.5,1396.5" fill="#00a000" stroke="#fff" stroke-width="1"/>
<path d="M51 1398h1v2h1v2h-3v-2h1z" fill="#fff078"/>
<text class="s" x="526.3" y="1399" textLength="96" lengthAdjust="spacingAndGlyphs" dy="0 0 0 0 0 0 0 0 0 -1 1">UniRef100_Q6DEP5</text>
<path d="M10 1406H16v3H10zM502 1406H527v3H502z" fill="#000033"/>
<path d="M16 1406h11v3h-11zM43 1406h454v3h-454z" fill="#00a000"/>
<path d="M27 1407h16v1h-16z" fill="#00a000"/>
<rect x="16" y="1403" width="1" height="9" fill="#fff"/>
<polygon points="497.5,1402.5 497.5,1412.5 502.5,1407.5" fill="#00a000" stroke="#fff" stroke-width="1"/>
<text class="s" x="526.3" y="1410" textLength="96" lengthAdjust="spacingAndGlyphs" dy="0 0 0 0 0 0 0 0 0 -1 1">UniRef100_Q5DB08</text>
<path d="M25 1417h14v3h-14zM44 1417h8v3h-8zM55 1417h426v3h-426z" fill="#00a000"/>
<path d="M39 1418h5v1h-5zM52 1418h3v1h-3z" fill="#00a000"/>
<rect x="25" y="1414" width="1" height="9" fill="#fff"/>
<polygon points="481.5,1413.5 481.5,1423.5 486.5,1418.5" fill="#00a000" stroke="#fff" stroke-width="1"/>
<text class="s" x="526.3" y="1421" textLength="96" lengthAdjust="spacingAndGlyphs" dy="0 0 0 0 0 0 0 0 0 -1 1">UniRef100_B6JUX0</text>
<path d="M10 1428H16v3H10zM461 1428H527v3H461z" fill="#000033"/>
<path d="M16 1428h15v3h-15zM34 1428h422v3h-422z" fill="#00c8c8"/>
<path d="M31 1429h3v1h-3z" fill="#00c8c8"/>
<rect x="16" y="1425" width="1" height="9" fill="#fff"/>
<polygon points="456.5,1424.5 456.5,1434.5 461.5,1429.5" fill="#00c8c8" stroke="#fff" stroke-width="1"/>
<path d="M51 1431h1v2h1v2h-3v-2h1z" fill="#fff078"/>
<text class="s" x="526.3" y="1432" textLength="108" lengthAdjust="spacingAndGlyphs" dy="0 0 0 0 0 0 0 0 0 -1 1">UniRef100_UPI000..</text>
<path d="M16 1439h15v3h-15zM34 1439h422v3h-422z" fill="#00c8c8"/>
<path d="M31 1440h3v1h-3z" fill="#00c8c8"/>
<rect x="16" y="1436" width="1" height="9" fill="#fff"/>
<polygon points="456.5,1435.5 456.5,1445.5 461.5,1440.5" fill="#00c8c8" stroke="#fff" stroke-width="1"/>
<path d="M51 1442h1v2h1v2h-3v-2h1z" fill="#fff078"/>
<text class="s" x="526.3" y="1443" textLength="108" lengthAdjust="spacingAndGlyphs" dy="0 0 0 0 0 0 0 0 0 -1 1">UniRef100_UPI000..</text>
<path d="M10 1450H13v3H10zM502 1450H527v3H502z" fill="#000033"/>
<path d="M13 1450h17v3h-17zM35 1450h127v3h-127zM164 1450h333v3h-333z" fill="#00a000"/>
<path d="M30 1451h5v1h-5zM162 1451h2v1h-2z" fill="#00a000"/>
<rect x="13" y="1447" width="1" height="9" fill="#fff"/>
<polygon points="497.5,1446.5 497.5,1456.5 502.5,1451.5" fill="#00a000" stroke="#fff" stroke-width="1"/>
<path d="M44 1453h1v2h1v2h-3v-2h1z" fill="#fff078"/>
<text class="s" x="526.3" y="1454" textLength="96" lengthAdjust="spacingAndGlyphs" dy="0 0 0 0 0 0 0 0 0 -1 1">UniRef100_B4KTL7</text>
<path d="M16 1461h15v3h-15zM35 1461h129v3h-129zM166 1461h331v3h-331z" fill="#00a000"/>
<path d="M31 1462h4v1h-4zM164 1462h2v1h-2z" fill="#00a000"/>
<rect x="16" y="1458" width="1" height="9" fill="#fff"/>
<polygon points="497.5,1457.5 497.5,1467.5 502.5,1462.5" fill="#00a000" stroke="#fff" stroke-width="1"/>
<path d="M51 1464h1v2h1v2h-3v-2h1z" fill="#fff078"/>
<text class="s" x="526.3" y="1465" textLength="96" lengthAdjust="spacingAndGlyphs" dy="0 0 0 0 0 0 0 0 0 -1 1">UniRef100_Q6PDV9</text>
<path d="M10 1472H25v3H10zM502 1472H527v3H502z" fill="#000033"/>
<path d="M25 1472h14v3h-14zM41 1472h456v3h-456z" fill="#00a000"/>
<path d="M39 1473h2v1h-2z" fill="#00a000"/>
<rect x="25" y="1469" width="1" height="9" fill="#fff"/>
<polygon points="497.5,1468.5 497.5,1478.5 502.5,1473.5" fill="#00a000" stroke="#fff" stroke-width="1"/>
<path d="M175 1475h1v2h1v2h-3v-2h1z" fill="#fff078"/>
<text class="s" x="526.3" y="1476" textLength="96" lengthAdjust="spacingAndGlyphs" dy="0 0 0 0 0 0 0 0 0 -1 1">UniRef100_B3L435</text>
<path d="M16 1483h11v3h-11zM32 1483h132v3h-132zM166 1483h331v3h-331z" fill="#00a000"/>
<path d="M27 1484h5v1h-5zM164 1484h2v1h-2z" fill="#00a000"/>
<rect x="16" y="1480" width="1" height="9" fill="#fff"/>
<polygon points="497.5,1479.5 497.5,1489.5 502.5,1484.5" fill="#00a000" stroke="#fff" stroke-width="1"/>
<text class="s" x="526.3" y="1487" textLength="108" lengthAdjust="spacingAndGlyphs" dy="0 0 0 0 0 0 0 0 0 -1 1">UniRef100_UPI000..</text>
<path d="M10 1494H16v3H10zM461 1494H527v3H461z" fill="#000033"/>
<path d="M16 1494h15v3h-15zM34 1494h422v3h-422z" fill="#00c8c8"/>
<path d="M31 1495h3v1h-3z" fill="#00c8c8"/>
<rect x="16" y="1491" width="1" height="9" fill="#fff"/>
<polygon points="456.5,1490.5 456.5,1500.5 461.5,1495.5" fill="#00c8c8" stroke="#fff" stroke-width="1"/>
<path d="M51 1497h1v2h1v2h-3v-2h1z" fill="#fff078"/>
<text class="s" x="526.3" y="1498" textLength="96" lengthAdjust="spacingAndGlyphs" dy="0 0 0 0 0 0 0 0 0 -1 1">UniRef100_Q9DB79</text>
<path d="M13 1505h17v3h-17zM35 1505h127v3h-127zM164 1505h333v3h-333z" fill="#00a000"/>
<path d="M30 1506h5v1h-5zM162 1506h2v1h-2z" fill="#00a000"/>
<rect x="13" y="1502" width="1" height="9" fill="#fff"/>
<polygon points="497.5,1501.5 497.5,1511.5 502.5,1506.5" fill="#00a000" stroke="#fff" stroke-width="1"/>
<path d="M44 1508h1v2h1v2h-3v-2h1z" fill="#fff078"/>
<text class="s" x="526.3" y="1509" textLength="96" lengthAdjust="spacingAndGlyphs" dy="0 0 0 0 0 0 0 0 0 -1 1">UniRef100_B4JW67</text>
<path d="M10 1516H16v3H10zM502 1516H527v3H502z" fill="#000033"/>
<path d="M16 1516h11v3h-11zM32 1516h29v3h-29zM66 1516h431v3h-431z" fill="#00a000"/>
<path d="M27 1517h5v1h-5zM61 1517h5v1h-5z" fill="#00a000"/>
<rect x="16" y="1513" width="1" height="9" fill="#fff"/>
<polygon points="497.5,1512.5 497.5,1522.5 502.5,1517.5" fill="#00a000" stroke="#fff" stroke-width="1"/>
<text class="s" x="526.3" y="1520" textLength="108" lengthAdjust="spacingAndGlyphs" dy="0 0 0 0 0 0 0 0 0 -1 1">UniRef100_UPI000..</text>
<path d="M25 1527h14v3h-14zM41 1527h456v3h-456z" fill="#00a000"/>
<path d="M39 1528h2v1h-2z" fill="#00a000"/>
<rect x="25" y="1524" width="1" height="9" fill="#fff"/>
<polygon points="497.5,1523.5 497.5,1533.5 502.5,1528.5" fill="#00a000" stroke="#fff" stroke-width="1"/>
<path d="M175 1530h1v2h1v2h-3v-2h1z" fill="#fff078"/>
<text class="s" x="526.3" y="1531" textLength="96" lengthAdjust="spacingAndGlyphs" dy="0 0 0 0 0 0 0 0 0 -1 1">UniRef100_O77381</text>
<path d="M10 1538H22v3H10zM502 1538H527v3H502z" fill="#000033"/>
<path d="M22 1538h12v3h-12zM39 1538h458v3h-458z" fill="#00a000"/>
<path d="M34 1539h5v1h-5z" fill="#00a000"/>
<rect x="22" y="1535" width="1" height="9" fill="#fff"/>
<polygon points="497.5,1534.5 497.5,1544.5 502.5,1539.5" fill="#00a000" stroke="#fff" stroke-width="1"/>
<text class="s" x="526.3" y="1542" textLength="96" lengthAdjust="spacingAndGlyphs" dy="0 0 0 0 0 0 0 0 0 -1 1">UniRef100_C6LXB3</text>
<path d="M22 1549h12v3h-12zM39 1549h458v3h-458z" fill="#00a000"/>
<path d="M34 1550h5v1h-5z" fill="#00a000"/>
<rect x="22" y="1546" width="1" height="9" fill="#fff"/>
<polygon points="497.5,1545.5 497.5,1555.5 502.5,1550.5" fill="#00a000" stroke="#fff" stroke-width="1"/>
<text class="s" x="526.3" y="1553" textLength="96" lengthAdjust="spacingAndGlyphs" dy="0 0 0 0 0 0 0 0 0 -1 1">UniRef100_A8BVU0</text>
<path d="M10 1560H25v3H10zM486 1560H527v3H486z" fill="#000033"/>
<path d="M25 1560h12v3h-12zM42 1560h7v3h-7zM55 1560h426v3h-426z" fill="#00a000"/>
<path d="M37 1561h5v1h-5zM49 1561h6v1h-6z" fill="#00a000"/>
<rect x="25" y="1557" width="1" height="9" fill="#fff"/>
<polygon points="481.5,1556.5 481.5,1566.5 486.5,1561.5" fill="#00a000" stroke="#fff" stroke-width="1"/>
<text class="s" x="526.3" y="1564" textLength="96" lengthAdjust="spacingAndGlyphs" dy="0 0 0 0 0 0 0 0 0 -1 1">UniRef100_P79013</text>
<path d="M16 1571h16v3h-16zM37 1571h127v3h-127zM166 1571h331v3h-331z" fill="#00a000"/>
<path d="M32 1572h5v1h-5zM164 1572h2v1h-2z" fill="#00a000"/>
<rect x="16" y="1568" width="1" height="9" fill="#fff"/>
<polygon points="497.5,1567.5 497.5,1577.5 502.5,1572.5" fill="#00a000" stroke="#fff" stroke-width="1"/>
<path d="M46 1574h1v2h1v2h-3v-2h1z" fill="#fff078"/>
<text class="s" x="526.3" y="1575" textLength="96" lengthAdjust="spacingAndGlyphs" dy="0 0 0 0 0 0 0 0 0 -1 1">UniRef100_Q0E9B6</text>
<path d="M10 1582H25v3H10zM486 1582H527v3H486z" fill="#000033"/>
<path d="M25 1582h14v3h-14zM44 1582h8v3h-8zM55 1582h426v3h-426z" fill="#00a000"/>
<path d="M39 1583h5v1h-5zM52 1583h3v1h-3z" fill="#00a000"/>
<rect x="25" y="1579" width="1" height="9" fill="#fff"/>
<polygon points="481.5,1578.5 481.5,1588.5 486.5,1583.5" fill="#00a000" stroke="#fff" stroke-width="1"/>
<text class="s" x="526.3" y="1586" textLength="96" lengthAdjust="spacingAndGlyphs" dy="0 0 0 0 0 0 0 0 0 -1 1">UniRef100_B6JVT6</text>
<path d="M16 1593h11v3h-11zM31 1593h139v3h-139zM172 1593h325v3h-325z" fill="#00a000"/>
<path d="M27 1594h4v1h-4zM170 1594h2v1h-2z" fill="#00a000"/>
<rect x="16" y="1590" width="1" height="9" fill="#fff"/>
<polygon points="497.5,1589.5 497.5,1599.5 502.5,1594.5" fill="#00a000" stroke="#fff" stroke-width="1"/>
<text class="s" x="526.3" y="1597" textLength="96" lengthAdjust="spacingAndGlyphs" dy="0 0 0 0 0 0 0 0 0 -1 1">UniRef100_Q54S90</text>
<path d="M10 1604H16v3H10zM502 1604H527v3H502z" fill="#000033"/>
<path d="M16 1604h15v3h-15zM34 1604h463v3h-463z" fill="#00a000"/>
<path d="M31 1605h3v1h-3z" fill="#00a000"/>
<rect x="16" y="1601" width="1" height="9" fill="#fff"/>
<polygon points="497.5,1600.5 497.5,1610.5 502.5,1605.5" fill="#00a000" stroke="#fff" stroke-width="1"/>
<path d="M169 1607h1v2h1v2h-3v-2h1z" fill="#fff078"/>
<text class="s" x="526.3" y="1608" textLength="96" lengthAdjust="spacingAndGlyphs" dy="0 0 0 0 0 0 0 0 0 -1 1">UniRef100_C5KXR1</text>
<path d="M13 1615h15v3h-15zM33 1615h129v3h-129zM164 1615h333v3h-333z" fill="#00a000"/>
<path d="M28 1616h5v1h-5zM162 1616h2v1h-2z" fill="#00a000"/>
<rect x="13" y="1612" width="1" height="9" fill="#fff"/>
<polygon points="497.5,1611.5 497.5,1621.5 502.5,1616.5" fill="#00a000" stroke="#fff" stroke-width="1"/>
<path d="M48 1618h1v2h1v2h-3v-2h1z" fill="#fff078"/>
<text class="s" x="526.3" y="1619" textLength="96" lengthAdjust="spacingAndGlyphs" dy="0 0 0 0 0 0 0 0 0 -1 1">UniRef100_C1C2F1</text>
<path d="M10 1626H16v3H10zM502 1626H527v3H502z" fill="#000033"/>
<path d="M16 1626h15v3h-15zM35 1626h131v3h-131zM168 1626h329v3h-329z" fill="#00a000"/>
<path d="M31 1627h4v1h-4zM166 1627h2v1h-2z" fill="#00a000"/>
<rect x="16" y="1623" width="1" height="9" fill="#fff"/>
<polygon points="497.5,1622.5 497.5,1632.5 502.5,1627.5" fill="#00a000" stroke="#fff" stroke-width="1"/>
<text class="s" x="526.3" y="1630" textLength="96" lengthAdjust="spacingAndGlyphs" dy="0 0 0 0 0 0 0 0 0 -1 1">UniRef100_B3S5R7</text>
<path d="M16 1637h15v3h-15zM35 1637h128v3h-128zM165 1637h298v3h-298z" fill="#00a000"/>
<path d="M31 1638h4v1h-4zM163 1638h2v1h-2z" fill="#00a000"/>
<rect x="16" y="1634" width="1" height="9" fill="#fff"/>
<polygon points="463.5,1633.5 463.5,1643.5 468.5,1638.5" fill="#00a000" stroke="#fff" stroke-width="1"/>
<path d="M48 1640h1v2h1v2h-3v-2h1z" fill="#fff078"/>
<text class="s" x="526.3" y="1641" textLength="96" lengthAdjust="spacingAndGlyphs" dy="0 0 0 0 0 0 0 0 0 -1 1">UniRef100_A0C125</text>
<path d="M10 1648H16v3H10zM502 1648H527v3H502z" fill="#000033"/>
<path d="M16 1648h15v3h-15zM35 1648h128v3h-128zM165 1648h332v3h-332z" fill="#00a000"/>
<path d="M31 1649h4v1h-4zM163 1649h2v1h-2z" fill="#00a000"/>
<rect x="16" y="1645" width="1" height="9" fill="#fff"/>
<polygon points="497.5,1644.5 497.5,1654.5 502.5,1649.5" fill="#00a000" stroke="#fff" stroke-width="1"/>
<path d="M51 1651h1v2h1v2h-3v-2h1z" fill="#fff078"/>
<text class="s" x="526.3" y="1652" textLength="96" lengthAdjust="spacingAndGlyphs" dy="0 0 0 0 0 0 0 0 0 -1 1">UniRef100_C3KIQ4</text>
<path d="M25 1659h13v3h-13zM44 1659h127v3h-127zM173 1659h324v3h-324z" fill="#00a000"/>
<path d="M38 1660h6v1h-6zM171 1660h2v1h-2z" fill="#00a000"/>
<rect x="25" y="1656" width="1" height="9" fill="#fff"/>
<polygon points="497.5,1655.5 497.5,1665.5 502.5,1660.5" fill="#00a000" stroke="#fff" stroke-width="1"/>
<text class="s" x="526.3" y="1663" textLength="96" lengthAdjust="spacingAndGlyphs" dy="0 0 0 0 0 0 0 0 0 -1 1">UniRef100_A7TJD0</text>
<path d="M10 1670H16v3H10zM502 1670H527v3H502z" fill="#000033"/>
<path d="M16 1670h15v3h-15zM35 1670h128v3h-128zM165 1670h332v3h-332z" fill="#00a000"/>
<path d="M31 1671h4v1h-4zM163 1671h2v1h-2z" fill="#00a000"/>
<rect x="16" y="1667" width="1" height="9" fill="#fff"/>
<polygon points="497.5,1666.5 497.5,1676.5 502.5,1671.5" fill="#00a000" stroke="#fff" stroke-width="1"/>
<path d="M51 1673h1v2h1v2h-3v-2h1z" fill="#fff078"/>
<text class="s" x="526.3" y="1674" textLength="96" lengthAdjust="spacingAndGlyphs" dy="0 0 0 0 0 0 0 0 0 -1 1">UniRef100_A0EZU4</text>
<path d="M16 1681h465v3h-465z" fill="#00a000"/>
<rect x="16" y="1678" width="1" height="9" fill="#fff"/>
<polygon points="481.5,1677.5 481.5,1687.5 486.5,1682.5" fill="#00a000" stroke="#fff" stroke-width="1"/>
<text class="s" x="526.3" y="1685" textLength="96" lengthAdjust="spacingAndGlyphs" dy="0 0 0 0 0 0 0 0 0 -1 1">UniRef100_Q86G63</text>
<path d="M10 1692H13v3H10zM502 1692H527v3H502z" fill="#000033"/>
<path d="M13 1692h17v3h-17zM35 1692h127v3h-127zM164 1692h333v3h-333z" fill="#00a000"/>
<path d="M30 1693h5v1h-5zM162 1693h2v1h-2z" fill="#00a000"/>
<rect x="13" y="1689" width="1" height="9" fill="#fff"/>
<polygon points="497.5,1688.5 497.5,1698.5 502.5,1693.5" fill="#00a000" stroke="#fff" stroke-width="1"/>
<path d="M44 1695h1v2h1v2h-3v-2h1z" fill="#fff078"/>
<text class="s" x="526.3" y="1696" textLength="96" lengthAdjust="spacingAndGlyphs" dy="0 0 0 0 0 0 0 0 0 -1 1">UniRef100_B4MY91</text>
<path d="M25 1703h12v3h-12zM42 1703h11v3h-11zM55 1703h442v3h-442z" fill="#00a000"/>
<path d="M37 1704h5v1h-5zM53 1704h2v1h-2z" fill="#00a000"/>
<rect x="25" y="1700" width="1" height="9" fill="#fff"/>
<polygon points="497.5,1699.5 497.5,1709.5 502.5,1704.5" fill="#00a000" stroke="#fff" stroke-width="1"/>
<text class="s" x="526.3" y="1707" textLength="96" lengthAdjust="spacingAndGlyphs" dy="0 0 0 0 0 0 0 0 0 -1 1">UniRef100_Q75DW4</text>
<path d="M10 1714H25v3H10zM502 1714H527v3H502z" fill="#000033"/>
<path d="M25 1714h14v3h-14zM44 1714h453v3h-453z" fill="#00a000"/>
<path d="M39 1715h5v1h-5z" fill="#00a000"/>
<rect x="25" y="1711" width="1" height="9" fill="#fff"/>
<polygon points="497.5,1710.5 497.5,1720.5 502.5,1715.5" fill="#00a000" stroke="#fff" stroke-width="1"/>
<text class="s" x="526.3" y="1718" textLength="96" lengthAdjust="spacingAndGlyphs" dy="0 0 0 0 0 0 0 0 0 -1 1">UniRef100_Q6FM18</text>
<path d="M16 1725h11v3h-11zM31 1725h135v3h-135zM168 1725h329v3h-329z" fill="#00a000"/>
<path d="M27 1726h4v1h-4zM166 1726h2v1h-2z" fill="#00a000"/>
<rect x="16" y="1722" width="1" height="9" fill="#fff"/>
<polygon points="497.5,1721.5 497.5,1731.5 502.5,1726.5" fill="#00a000" stroke="#fff" stroke-width="1"/>
<text class="s" x="526.3" y="1729" textLength="96" lengthAdjust="spacingAndGlyphs" dy="0 0 0 0 0 0 0 0 0 -1 1">UniRef100_B0CPS4</text>
<path d="M10 1736H16v3H10zM502 1736H527v3H502z" fill="#000033"/>
<path d="M16 1736h15v3h-15zM35 1736h128v3h-128zM165 1736h332v3h-332z" fill="#00a000"/>
<path d="M31 1737h4v1h-4zM163 1737h2v1h-2z" fill="#00a000"/>
<rect x="16" y="1733" width="1" height="9" fill="#fff"/>
<polygon points="497.5,1732.5 497.5,1742.5 502.5,1737.5" fill="#00a000" stroke="#fff" stroke-width="1"/>
<path d="M51 1739h1v2h1v2h-3v-2h1z" fill="#fff078"/>
<text class="s" x="526.3" y="1740" textLength="96" lengthAdjust="spacingAndGlyphs" dy="0 0 0 0 0 0 0 0 0 -1 1">UniRef100_C1BIC5</text>
<path d="M25 1747h14v3h-14zM41 1747h456v3h-456z" fill="#00a000"/>
<path d="M39 1748h2v1h-2z" fill="#00a000"/>
<rect x="25" y="1744" width="1" height="9" fill="#fff"/>
<polygon points="497.5,1743.5 497.5,1753.5 502.5,1748.5" fill="#00a000" stroke="#fff" stroke-width="1"/>
<path d="M175 1750h1v2h1v2h-3v-2h1z" fill="#fff078"/>
<text class="s" x="526.3" y="1751" textLength="96" lengthAdjust="spacingAndGlyphs" dy="0 0 0 0 0 0 0 0 0 -1 1">UniRef100_Q4YWP0</text>
<path d="M10 1758H16v3H10zM486 1758H527v3H486z" fill="#000033"/>
<path d="M16 1758h465v3h-465z" fill="#00a000"/>
<rect x="16" y="1755" width="1" height="9" fill="#fff"/>
<polygon points="481.5,1754.5 481.5,1764.5 486.5,1759.5" fill="#00a000" stroke="#fff" stroke-width="1"/>
<text class="s" x="526.3" y="1762" textLength="96" lengthAdjust="spacingAndGlyphs" dy="0 0 0 0 0 0 0 0 0 -1 1">UniRef100_Q09JR5</text>
<path d="M25 1769h12v3h-12zM42 1769h455v3h-455z" fill="#00a000"/>
<path d="M37 1770h5v1h-5z" fill="#00a000"/>
<rect x="25" y="1766" width="1" height="9" fill="#fff"/>
<polygon points="497.5,1765.5 497.5,1775.5 502.5,1770.5" fill="#00a000" stroke="#fff" stroke-width="1"/>
<path d="M57 1772h1v2h1v2h-3v-2h1z" fill="#fff078"/>
<text class="s" x="526.3" y="1773" textLength="96" lengthAdjust="spacingAndGlyphs" dy="0 0 0 0 0 0 0 0 0 -1 1">UniRef100_Q9DF26</text>
<path d="M10 1780H16v3H10zM502 1780H527v3H502z" fill="#000033"/>
<path d="M16 1780h15v3h-15zM35 1780h128v3h-128zM165 1780h332v3h-332z" fill="#00a000"/>
<path d="M31 1781h4v1h-4zM163 1781h2v1h-2z" fill="#00a000"/>
<rect x="16" y="1777" width="1" height="9" fill="#fff"/>
<polygon points="497.5,1776.5 497.5,1786.5 502.5,1781.5" fill="#00a000" stroke="#fff" stroke-width="1"/>
<path d="M51 1783h1v2h1v2h-3v-2h1z" fill="#fff078"/>
<text class="s" x="526.3" y="1784" textLength="96" lengthAdjust="spacingAndGlyphs" dy="0 0 0 0 0 0 0 0 0 -1 1">UniRef100_A2Q0S6</text>
<path d="M13 1791h17v3h-17zM35 1791h127v3h-127zM164 1791h333v3h-333z" fill="#00a000"/>
<path d="M30 1792h5v1h-5zM162 1792h2v1h-2z" fill="#00a000"/>
<rect x="13" y="1788" width="1" height="9" fill="#fff"/>
<polygon points="497.5,1787.5 497.5,1797.5 502.5,1792.5" fill="#00a000" stroke="#fff" stroke-width="1"/>
<path d="M44 1794h1v2h1v2h-3v-2h1z" fill="#fff078"/>
<text class="s" x="526.3" y="1795" textLength="96" lengthAdjust="spacingAndGlyphs" dy="0 0 0 0 0 0 0 0 0 -1 1">UniRef100_B4G9W1</text>
<path d="M10 1802H72v3H10zM502 1802H527v3H502z" fill="#000033"/>
<path d="M72 1802h10v3h-10zM86 1802h124v3h-124zM212 1802h285v3h-285z" fill="#00c8c8"/>
<path d="M82 1803h4v1h-4zM210 1803h2v1h-2z" fill="#00c8c8"/>
<rect x="72" y="1799" width="1" height="9" fill="#fff"/>
<polygon points="497.5,1798.5 497.5,1808.5 502.5,1803.5" fill="#00c8c8" stroke="#fff" stroke-width="1"/>
<text class="s" x="526.3" y="1806" textLength="108" lengthAdjust="spacingAndGlyphs" dy="0 0 0 0 0 0 0 0 0 -1 1">UniRef100_UPI000..</text>
<path d="M16 1813h15v3h-15zM35 1813h128v3h-128zM165 1813h332v3h-332z" fill="#00a000"/>
<path d="M31 1814h4v1h-4zM163 1814h2v1h-2z" fill="#00a000"/>
<rect x="16" y="1810" width="1" height="9" fill="#fff"/>
<polygon points="497.5,1809.5 497.5,1819.5 502.5,1814.5" fill="#00a000" stroke="#fff" stroke-width="1"/>
<path d="M51 1816h1v2h1v2h-3v-2h1z" fill="#fff078"/>
<text class="s" x="526.3" y="1817" textLength="96" lengthAdjust="spacingAndGlyphs" dy="0 0 0 0 0 0 0 0 0 -1 1">UniRef100_Q90YR3</text>
<path d="M10 1824H16v3H10zM502 1824H527v3H502z" fill="#000033"/>
<path d="M16 1824h15v3h-15zM35 1824h128v3h-128zM165 1824h332v3h-332z" fill="#00a000"/>
<path d="M31 1825h4v1h-4zM163 1825h2v1h-2z" fill="#00a000"/>
<rect x="16" y="1821" width="1" height="9" fill="#fff"/>
<polygon points="497.5,1820.5 497.5,1830.5 502.5,1825.5" fill="#00a000" stroke="#fff" stroke-width="1"/>
<path d="M51 1827h1v2h1v2h-3v-2h1z" fill="#fff078"/>
<text class="s" x="526.3" y="1828" textLength="96" lengthAdjust="spacingAndGlyphs" dy="0 0 0 0 0 0 0 0 0 -1 1">UniRef100_Q4S999</text>
<path d="M16 1835h15v3h-15zM35 1835h128v3h-128zM165 1835h332v3h-332z" fill="#00a000"/>
<path d="M31 1836h4v1h-4zM163 1836h2v1h-2z" fill="#00a000"/>
<rect x="16" y="1832" width="1" height="9" fill="#fff"/>
<polygon points="497.5,1831.5 497.5,1841.5 502.5,1836.5" fill="#00a000" stroke="#fff" stroke-width="1"/>
<path d="M51 1838h1v2h1v2h-3v-2h1z" fill="#fff078"/>
<text class="s" x="526.3" y="1839" textLength="96" lengthAdjust="spacingAndGlyphs" dy="0 0 0 0 0 0 0 0 0 -1 1">UniRef100_C1BFE9</text>
<path d="M10 1846H41v3H10zM502 1846H527v3H502z" fill="#000033"/>
<path d="M41 1846h456v3h-456z" fill="#00a000"/>
<rect x="41" y="1843" width="1" height="9" fill="#fff"/>
<polygon points="497.5,1842.5 497.5,1852.5 502.5,1847.5" fill="#00a000" stroke="#fff" stroke-width="1"/>
<text class="s" x="526.3" y="1850" textLength="96" lengthAdjust="spacingAndGlyphs" dy="0 0 0 0 0 0 0 0 0 -1 1">UniRef100_Q70MP3</text>
<path d="M25 1857h14v3h-14zM41 1857h456v3h-456z" fill="#00a000"/>
<path d="M39 1858h2v1h-2z" fill="#00a000"/>
<rect x="25" y="1854" width="1" height="9" fill="#fff"/>
<polygon points="497.5,1853.5 497.5,1863.5 502.5,1858.5" fill="#00a000" stroke="#fff" stroke-width="1"/>
<path d="M175 1860h1v2h1v2h-3v-2h1z" fill="#fff078"/>
<text class="s" x="526.3" y="1861" textLength="96" lengthAdjust="spacingAndGlyphs" dy="0 0 0 0 0 0 0 0 0 -1 1">UniRef100_Q4Y5T5</text>
<path d="M10 1868H10v3H10zM502 1868H527v3H502z" fill="#000033"/>
<path d="M10 1868h20v3h-20zM35 1868h125v3h-125zM162 1868h335v3h-335z" fill="#00a000"/>
<path d="M30 1869h5v1h-5zM160 1869h2v1h-2z" fill="#00a000"/>
<rect x="10" y="1865" width="1" height="9" fill="#fff"/>
<polygon points="497.5,1864.5 497.5,1874.5 502.5,1869.5" fill="#00a000" stroke="#fff" stroke-width="1"/>
<text class="s" x="526.3" y="1872" textLength="96" lengthAdjust="spacingAndGlyphs" dy="0 0 0 0 0 0 0 0 0 -1 1">UniRef100_C4JD65</text>
<path d="M16 1879h15v3h-15zM35 1879h128v3h-128zM165 1879h332v3h-332z" fill="#00a000"/>
<path d="M31 1880h4v1h-4zM163 1880h2v1h-2z" fill="#00a000"/>
<rect x="16" y="1876" width="1" height="9" fill="#fff"/>
<polygon points="497.5,1875.5 497.5,1885.5 502.5,1880.5" fill="#00a000" stroke="#fff" stroke-width="1"/>
<path d="M51 1882h1v2h1v2h-3v-2h1z" fill="#fff078"/>
<text class="s" x="526.3" y="1883" textLength="96" lengthAdjust="spacingAndGlyphs" dy="0 0 0 0 0 0 0 0 0 -1 1">UniRef100_C3KHI2</text>
<path d="M10 1890H10v3H10zM489 1890H527v3H489z" fill="#000033"/>
<path d="M10 1890h474v3h-474z" fill="#00a000"/>
<rect x="10" y="1887" width="1" height="9" fill="#fff"/>
<polygon points="484.5,1886.5 484.5,1896.5 489.5,1891.5" fill="#00a000" stroke="#fff" stroke-width="1"/>
<text class="s" x="526.3" y="1894" textLength="96" lengthAdjust="spacingAndGlyphs" dy="0 0 0 0 0 0 0 0 0 -1 1">UniRef100_Q38CI4</text>
<path d="M10 1901h474v3h-474z" fill="#00a000"/>
<rect x="10" y="1898" width="1" height="9" fill="#fff"/>
<polygon points="484.5,1897.5 484.5,1907.5 489.5,1902.5" fill="#00a000" stroke="#fff" stroke-width="1"/>
<text class="s" x="526.3" y="1905" textLength="96" lengthAdjust="spacingAndGlyphs" dy="0 0 0 0 0 0 0 0 0 -1 1">UniRef100_C9ZIN6</text>
<path d="M10 1912H25v3H10zM502 1912H527v3H502z" fill="#000033"/>
<path d="M25 1912h14v3h-14zM44 1912h453v3h-453z" fill="#00a000"/>
<path d="M39 1913h5v1h-5z" fill="#00a000"/>
<rect x="25" y="1909" width="1" height="9" fill="#fff"/>
<polygon points="497.5,1908.5 497.5,1918.5 502.5,1913.5" fill="#00a000" stroke="#fff" stroke-width="1"/>
<path d="M53 1915h1v2h1v2h-3v-2h1z" fill="#fff078"/>
<text class="s" x="526.3" y="1916" textLength="96" lengthAdjust="spacingAndGlyphs" dy="0 0 0 0 0 0 0 0 0 -1 1">UniRef100_B3MC87</text>
<path d="M16 1923h15v3h-15zM35 1923h129v3h-129zM166 1923h331v3h-331z" fill="#00a000"/>
<path d="M31 1924h4v1h-4zM164 1924h2v1h-2z" fill="#00a000"/>
<rect x="16" y="1920" width="1" height="9" fill="#fff"/>
<polygon points="497.5,1919.5 497.5,1929.5 502.5,1924.5" fill="#00a000" stroke="#fff" stroke-width="1"/>
<path d="M46 1926h1v2h1v2h-3v-2h1z" fill="#fff078"/>
<text class="s" x="526.3" y="1927" textLength="96" lengthAdjust="spacingAndGlyphs" dy="0 0 0 0 0 0 0 0 0 -1 1">UniRef100_A8PT63</text>
<path d="M10 1934H25v3H10zM468 1934H527v3H468z" fill="#000033"/>
<path d="M25 1934h12v3h-12zM42 1934h421v3h-421z" fill="#00c8c8"/>
<path d="M37 1935h5v1h-5z" fill="#00c8c8"/>
<rect x="25" y="1931" width="1" height="9" fill="#fff"/>
<polygon points="463.5,1930.5 463.5,1940.5 468.5,1935.5" fill="#00c8c8" stroke="#fff" stroke-width="1"/>
<path d="M55 1937h1v2h1v2h-3v-2h1z" fill="#fff078"/>
<text class="s" x="526.3" y="1938" textLength="96" lengthAdjust="spacingAndGlyphs" dy="0 0 0 0 0 0 0 0 0 -1 1">UniRef100_A0BVQ1</text>
<path d="M16 1945h15v3h-15zM35 1945h128v3h-128zM165 1945h332v3h-332z" fill="#00a000"/>
<path d="M31 1946h4v1h-4zM163 1946h2v1h-2z" fill="#00a000"/>
<rect x="16" y="1942" width="1" height="9" fill="#fff"/>
<polygon points="497.5,1941.5 497.5,1951.5 502.5,1946.5" fill="#00a000" stroke="#fff" stroke-width="1"/>
<path d="M51 1948h1v2h1v2h-3v-2h1z" fill="#fff078"/>
<text class="s" x="526.3" y="1949" textLength="96" lengthAdjust="spacingAndGlyphs" dy="0 0 0 0 0 0 0 0 0 -1 1">UniRef100_C1BPQ6</text>
<path d="M10 1956H25v3H10zM502 1956H527v3H502z" fill="#000033"/>
<path d="M25 1956h24v3h-24zM55 1956h116v3h-116zM173 1956h324v3h-324z" fill="#00a000"/>
<path d="M49 1957h6v1h-6zM171 1957h2v1h-2z" fill="#00a000"/>
<rect x="25" y="1953" width="1" height="9" fill="#fff"/>
<polygon points="497.5,1952.5 497.5,1962.5 502.5,1957.5" fill="#00a000" stroke="#fff" stroke-width="1"/>
<text class="s" x="526.3" y="1960" textLength="96" lengthAdjust="spacingAndGlyphs" dy="0 0 0 0 0 0 0 0 0 -1 1">UniRef100_C5DPH1</text>
<path d="M25 1967h24v3h-24zM55 1967h442v3h-442z" fill="#00a000"/>
<path d="M49 1968h6v1h-6z" fill="#00a000"/>
<rect x="25" y="1964" width="1" height="9" fill="#fff"/>
<polygon points="497.5,1963.5 497.5,1973.5 502.5,1968.5" fill="#00a000" stroke="#fff" stroke-width="1"/>
<text class="s" x="526.3" y="1971" textLength="96" lengthAdjust="spacingAndGlyphs" dy="0 0 0 0 0 0 0 0 0 -1 1">UniRef100_P26781</text>
<path d="M10 1978H16v3H10zM502 1978H527v3H502z" fill="#000033"/>
<path d="M16 1978h15v3h-15zM35 1978h128v3h-128zM165 1978h332v3h-332z" fill="#00a000"/>
<path d="M31 1979h4v1h-4zM163 1979h2v1h-2z" fill="#00a000"/>
<rect x="16" y="1975" width="1" height="9" fill="#fff"/>
<polygon points="497.5,1974.5 497.5,1984.5 502.5,1979.5" fill="#00a000" stroke="#fff" stroke-width="1"/>
<path d="M51 1981h1v2h1v2h-3v-2h1z" fill="#fff078"/>
<text class="s" x="526.3" y="1982" textLength="96" lengthAdjust="spacingAndGlyphs" dy="0 0 0 0 0 0 0 0 0 -1 1">UniRef100_Q4QRP2</text>
<path d="M16 1989h15v3h-15zM34 1989h410v3h-410z" fill="#00c8c8"/>
<path d="M31 1990h3v1h-3z" fill="#00c8c8"/>
<rect x="16" y="1986" width="1" height="9" fill="#fff"/>
<polygon points="444.5,1985.5 444.5,1995.5 449.5,1990.5" fill="#00c8c8" stroke="#fff" stroke-width="1"/>
<path d="M51 1992h1v2h1v2h-3v-2h1z" fill="#fff078"/>
<text class="s" x="526.3" y="1993" textLength="96" lengthAdjust="spacingAndGlyphs" dy="0 0 0 0 0 0 0 0 0 -1 1">UniRef100_Q1KS31</text>
<path d="M10 2000H16v3H10zM502 2000H527v3H502z" fill="#000033"/>
<path d="M16 2000h15v3h-15zM35 2000h128v3h-128zM165 2000h332v3h-332z" fill="#00a000"/>
<path d="M31 2001h4v1h-4zM163 2001h2v1h-2z" fill="#00a000"/>
<rect x="16" y="1997" width="1" height="9" fill="#fff"/>
<polygon points="497.5,1996.5 497.5,2006.5 502.5,2001.5" fill="#00a000" stroke="#fff" stroke-width="1"/>
<path d="M51 2003h1v2h1v2h-3v-2h1z" fill="#fff078"/>
<text class="s" x="526.3" y="2004" textLength="96" lengthAdjust="spacingAndGlyphs" dy="0 0 0 0 0 0 0 0 0 -1 1">UniRef100_C1BG30</text>
<path d="M16 2011h15v3h-15zM35 2011h128v3h-128zM165 2011h332v3h-332z" fill="#00a000"/>
<path d="M31 2012h4v1h-4zM163 2012h2v1h-2z" fill="#00a000"/>
<rect x="16" y="2008" width="1" height="9" fill="#fff"/>
<polygon points="497.5,2007.5 497.5,2017.5 502.5,2012.5" fill="#00a000" stroke="#fff" stroke-width="1"/>
<path d="M51 2014h1v2h1v2h-3v-2h1z" fill="#fff078"/>
<text class="s" x="526.3" y="2015" textLength="96" lengthAdjust="spacingAndGlyphs" dy="0 0 0 0 0 0 0 0 0 -1 1">UniRef100_B5DG01</text>
<path d="M10 2022H16v3H10zM502 2022H527v3H502z" fill="#000033"/>
<path d="M16 2022h12v3h-12zM35 2022h462v3h-462z" fill="#00a000"/>
<path d="M28 2023h7v1h-7z" fill="#00a000"/>
<rect x="16" y="2019" width="1" height="9" fill="#fff"/>
<polygon points="497.5,2018.5 497.5,2028.5 502.5,2023.5" fill="#00a000" stroke="#fff" stroke-width="1"/>
<path d="M47 2025h1v2h1v2h-3v-2h1z" fill="#fff078"/>
<text class="s" x="526.3" y="2026" textLength="96" lengthAdjust="spacingAndGlyphs" dy="0 0 0 0 0 0 0 0 0 -1 1">UniRef100_B0E6I3</text>
<path d="M16 2033h15v3h-15zM35 2033h128v3h-128zM165 2033h332v3h-332z" fill="#00a000"/>
<path d="M31 2034h4v1h-4zM163 2034h2v1h-2z" fill="#00a000"/>
<rect x="16" y="2030" width="1" height="9" fill="#fff"/>
<polygon points="497.5,2029.5 497.5,2039.5 502.5,2034.5" fill="#00a000" stroke="#fff" stroke-width="1"/>
<path d="M51 2036h1v2h1v2h-3v-2h1z" fill="#fff078"/>
<path d="M138 2036h1v2h1v2h-3v-2h1z" fill="#fff078"/>
<text class="s" x="526.3" y="2037" textLength="108" lengthAdjust="spacingAndGlyphs" dy="0 0 0 0 0 0 0 0 0 -1 1">UniRef100_UPI000..</text>
<path d="M10 2044H16v3H10zM502 2044H527v3H502z" fill="#000033"/>
<path d="M16 2044h15v3h-15zM35 2044h128v3h-128zM165 2044h332v3h-332z" fill="#00a000"/>
<path d="M31 2045h4v1h-4zM163 2045h2v1h-2z" fill="#00a000"/>
<rect x="16" y="2041" width="1" height="9" fill="#fff"/>
<polygon points="497.5,2040.5 497.5,2050.5 502.5,2045.5" fill="#00a000" stroke="#fff" stroke-width="1"/>
<path d="M51 2047h1v2h1v2h-3v-2h1z" fill="#fff078"/>
<path d="M138 2047h1v2h1v2h-3v-2h1z" fill="#fff078"/>
<text class="s" x="526.3" y="2048" textLength="108" lengthAdjust="spacingAndGlyphs" dy="0 0 0 0 0 0 0 0 0 -1 1">UniRef100_UPI000..</text>
<path d="M16 2055h15v3h-15zM35 2055h128v3h-128zM165 2055h332v3h-332z" fill="#00a000"/>
<path d="M31 2056h4v1h-4zM163 2056h2v1h-2z" fill="#00a000"/>
<rect x="16" y="2052" width="1" height="9" fill="#fff"/>
<polygon points="497.5,2051.5 497.5,2061.5 502.5,2056.5" fill="#00a000" stroke="#fff" stroke-width="1"/>
<path d="M51 2058h1v2h1v2h-3v-2h1z" fill="#fff078"/>
<text class="s" x="526.3" y="2059" textLength="96" lengthAdjust="spacingAndGlyphs" dy="0 0 0 0 0 0 0 0 0 -1 1">UniRef100_Q6DRF7</text>
<path d="M10 2066H16v3H10zM502 2066H527v3H502z" fill="#000033"/>
<path d="M16 2066h11v3h-11zM32 2066h465v3h-465z" fill="#00a000"/>
<path d="M27 2067h5v1h-5z" fill="#00a000"/>
<rect x="16" y="2063" width="1" height="9" fill="#fff"/>
<polygon points="497.5,2062.5 497.5,2072.5 502.5,2067.5" fill="#00a000" stroke="#fff" stroke-width="1"/>
<path d="M51 2069h1v2h1v2h-3v-2h1z" fill="#fff078"/>
<text class="s" x="526.3" y="2070" textLength="96" lengthAdjust="spacingAndGlyphs" dy="0 0 0 0 0 0 0 0 0 -1 1">UniRef100_C4M979</text>
<path d="M31 2077h26v3h-26zM60 2077h114v3h-114zM176 2077h321v3h-321z" fill="#00a000"/>
<path d="M57 2078h3v1h-3zM174 2078h2v1h-2z" fill="#00a000"/>
<rect x="31" y="2074" width="1" height="9" fill="#fff"/>
<polygon points="497.5,2073.5 497.5,2083.5 502.5,2078.5" fill="#00a000" stroke="#fff" stroke-width="1"/>
<text class="s" x="526.3" y="2081" textLength="96" lengthAdjust="spacingAndGlyphs" dy="0 0 0 0 0 0 0 0 0 -1 1">UniRef100_B7FDL5</text>
<path d="M10 2088H16v3H10zM502 2088H527v3H502z" fill="#000033"/>
<path d="M16 2088h25v3h-25zM43 2088h127v3h-127zM172 2088h325v3h-325z" fill="#00a000"/>
<path d="M41 2089h2v1h-2zM170 2089h2v1h-2z" fill="#00a000"/>
<rect x="16" y="2085" width="1" height="9" fill="#fff"/>
<polygon points="497.5,2084.5 497.5,2094.5 502.5,2089.5" fill="#00a000" stroke="#fff" stroke-width="1"/>
<text class="s" x="526.3" y="2092" textLength="96" lengthAdjust="spacingAndGlyphs" dy="0 0 0 0 0 0 0 0 0 -1 1">UniRef100_A8X0V2</text>
<path d="M25 2099h8v3h-8zM37 2099h460v3h-460z" fill="#00a000"/>
<path d="M33 2100h4v1h-4z" fill="#00a000"/>
<rect x="25" y="2096" width="1" height="9" fill="#fff"/>
<polygon points="497.5,2095.5 497.5,2105.5 502.5,2100.5" fill="#00a000" stroke="#fff" stroke-width="1"/>
<text class="s" x="526.3" y="2103" textLength="96" lengthAdjust="spacingAndGlyphs" dy="0 0 0 0 0 0 0 0 0 -1 1">UniRef100_C7GLX2</text>
<path d="M10 2110H16v3H10zM502 2110H527v3H502z" fill="#000033"/>
<path d="M16 2110h16v3h-16zM36 2110h127v3h-127zM165 2110h332v3h-332z" fill="#00a000"/>
<path d="M32 2111h4v1h-4zM163 2111h2v1h-2z" fill="#00a000"/>
<rect x="16" y="2107" width="1" height="9" fill="#fff"/>
<polygon points="497.5,2106.5 497.5,2116.5 502.5,2111.5" fill="#00a000" stroke="#fff" stroke-width="1"/>
<path d="M42 2113h1v2h1v2h-3v-2h1z" fill="#fff078"/>
<text class="s" x="526.3" y="2114" textLength="96" lengthAdjust="spacingAndGlyphs" dy="0 0 0 0 0 0 0 0 0 -1 1">UniRef100_Q7ZV05</text>
<path d="M16 2121h15v3h-15zM35 2121h128v3h-128zM165 2121h332v3h-332z" fill="#00a000"/>
<path d="M31 2122h4v1h-4zM163 2122h2v1h-2z" fill="#00a000"/>
<rect x="16" y="2118" width="1" height="9" fill="#fff"/>
<polygon points="497.5,2117.5 497.5,2127.5 502.5,2122.5" fill="#00a000" stroke="#fff" stroke-width="1"/>
<path d="M51 2124h1v2h1v2h-3v-2h1z" fill="#fff078"/>
<text class="s" x="526.3" y="2125" textLength="96" lengthAdjust="spacingAndGlyphs" dy="0 0 0 0 0 0 0 0 0 -1 1">UniRef100_B5X6G1</text>
<path d="M10 2132H16v3H10zM502 2132H527v3H502z" fill="#000033"/>
<path d="M16 2132h12v3h-12zM34 2132h463v3h-463z" fill="#00a000"/>
<path d="M28 2133h6v1h-6z" fill="#00a000"/>
<rect x="16" y="2129" width="1" height="9" fill="#fff"/>
<polygon points="497.5,2128.5 497.5,2138.5 502.5,2133.5" fill="#00a000" stroke="#fff" stroke-width="1"/>
<path d="M47 2135h1v2h1v2h-3v-2h1z" fill="#fff078"/>
<text class="s" x="526.3" y="2136" textLength="96" lengthAdjust="spacingAndGlyphs" dy="0 0 0 0 0 0 0 0 0 -1 1">UniRef100_C4LW92</text>
<path d="M16 2143h25v3h-25zM43 2143h127v3h-127zM172 2143h325v3h-325z" fill="#00a000"/>
<path d="M41 2144h2v1h-2zM170 2144h2v1h-2z" fill="#00a000"/>
<rect x="16" y="2140" width="1" height="9" fill="#fff"/>
<polygon points="497.5,2139.5 497.5,2149.5 502.5,2144.5" fill="#00a000" stroke="#fff" stroke-width="1"/>
<text class="s" x="526.3" y="2147" textLength="96" lengthAdjust="spacingAndGlyphs" dy="0 0 0 0 0 0 0 0 0 -1 1">UniRef100_Q20206</text>
<path d="M10 2154H10v3H10zM489 2154H527v3H489z" fill="#000033"/>
<path d="M10 2154h474v3h-474z" fill="#00a000"/>
<rect x="10" y="2151" width="1" height="9" fill="#fff"/>
<polygon points="484.5,2150.5 484.5,2160.5 489.5,2155.5" fill="#00a000" stroke="#fff" stroke-width="1"/>
<text class="s" x="526.3" y="2158" textLength="96" lengthAdjust="spacingAndGlyphs" dy="0 0 0 0 0 0 0 0 0 -1 1">UniRef100_D0A131</text>
<path d="M16 2165h12v3h-12zM34 2165h463v3h-463z" fill="#00a000"/>
<path d="M28 2166h6v1h-6z" fill="#00a000"/>
<rect x="16" y="2162" width="1" height="9" fill="#fff"/>
<polygon points="497.5,2161.5 497.5,2171.5 502.5,2166.5" fill="#00a000" stroke="#fff" stroke-width="1"/>
<path d="M47 2168h1v2h1v2h-3v-2h1z" fill="#fff078"/>
<text class="s" x="526.3" y="2169" textLength="96" lengthAdjust="spacingAndGlyphs" dy="0 0 0 0 0 0 0 0 0 -1 1">UniRef100_B0EMJ7</text>
<path d="M10 2176H16v3H10zM502 2176H527v3H502z" fill="#000033"/>
<path d="M16 2176h16v3h-16zM36 2176h127v3h-127zM165 2176h332v3h-332z" fill="#00a000"/>
<path d="M32 2177h4v1h-4zM163 2177h2v1h-2z" fill="#00a000"/>
<rect x="16" y="2173" width="1" height="9" fill="#fff"/>
<polygon points="497.5,2172.5 497.5,2182.5 502.5,2177.5" fill="#00a000" stroke="#fff" stroke-width="1"/>
<path d="M42 2179h1v2h1v2h-3v-2h1z" fill="#fff078"/>
<text class="s" x="526.3" y="2180" textLength="96" lengthAdjust="spacingAndGlyphs" dy="0 0 0 0 0 0 0 0 0 -1 1">UniRef100_O73666</text>
<path d="M25 2187h13v3h-13zM44 2187h127v3h-127zM173 2187h324v3h-324z" fill="#00a000"/>
<path d="M38 2188h6v1h-6zM171 2188h2v1h-2z" fill="#00a000"/>
<rect x="25" y="2184" width="1" height="9" fill="#fff"/>
<polygon points="497.5,2183.5 497.5,2193.5 502.5,2188.5" fill="#00a000" stroke="#fff" stroke-width="1"/>
<path d="M53 2190h1v2h1v2h-3v-2h1z" fill="#fff078"/>
<text class="s" x="526.3" y="2191" textLength="96" lengthAdjust="spacingAndGlyphs" dy="0 0 0 0 0 0 0 0 0 -1 1">UniRef100_B4NSG8</text>
<path d="M10 2198H25v3H10zM502 2198H527v3H502z" fill="#000033"/>
<path d="M25 2198h13v3h-13zM44 2198h127v3h-127zM173 2198h324v3h-324z" fill="#00a000"/>
<path d="M38 2199h6v1h-6zM171 2199h2v1h-2z" fill="#00a000"/>
<rect x="25" y="2195" width="1" height="9" fill="#fff"/>
<polygon points="497.5,2194.5 497.5,2204.5 502.5,2199.5" fill="#00a000" stroke="#fff" stroke-width="1"/>
<path d="M53 2201h1v2h1v2h-3v-2h1z" fill="#fff078"/>
<text class="s" x="526.3" y="2202" textLength="96" lengthAdjust="spacingAndGlyphs" dy="0 0 0 0 0 0 0 0 0 -1 1">UniRef100_B4HP68</text>
<path d="M25 2209h13v3h-13zM44 2209h127v3h-127zM173 2209h324v3h-324z" fill="#00a000"/>
<path d="M38 2210h6v1h-6zM171 2210h2v1h-2z" fill="#00a000"/>
<rect x="25" y="2206" width="1" height="9" fill="#fff"/>
<polygon points="497.5,2205.5 497.5,2215.5 502.5,2210.5" fill="#00a000" stroke="#fff" stroke-width="1"/>
<path d="M53 2212h1v2h1v2h-3v-2h1z" fill="#fff078"/>
<text class="s" x="526.3" y="2213" textLength="96" lengthAdjust="spacingAndGlyphs" dy="0 0 0 0 0 0 0 0 0 -1 1">UniRef100_B4P5M1</text>
<path d="M10 2220H16v3H10zM486 2220H527v3H486z" fill="#000033"/>
<path d="M16 2220h465v3h-465z" fill="#00a000"/>
<rect x="16" y="2217" width="1" height="9" fill="#fff"/>
<polygon points="481.5,2216.5 481.5,2226.5 486.5,2221.5" fill="#00a000" stroke="#fff" stroke-width="1"/>
<text class="s" x="526.3" y="2224" textLength="96" lengthAdjust="spacingAndGlyphs" dy="0 0 0 0 0 0 0 0 0 -1 1">UniRef100_A6N9Y8</text>
<path d="M16 2231h11v3h-11zM31 2231h466v3h-466z" fill="#00a000"/>
<path d="M27 2232h4v1h-4z" fill="#00a000"/>
<rect x="16" y="2228" width="1" height="9" fill="#fff"/>
<polygon points="497.5,2227.5 497.5,2237.5 502.5,2232.5" fill="#00a000" stroke="#fff" stroke-width="1"/>
<path d="M20 2234h1v2h1v2h-3v-2h1z" fill="#fff078"/>
<text class="s" x="526.3" y="2235" textLength="108" lengthAdjust="spacingAndGlyphs" dy="0 0 0 0 0 0 0 0 0 -1 1">UniRef100_UPI000..</text>
<path d="M10 2242H13v3H10zM502 2242H527v3H502z" fill="#000033"/>
<path d="M13 2242h13v3h-13zM30 2242h467v3h-467z" fill="#00a000"/>
<path d="M26 2243h4v1h-4z" fill="#00a000"/>
<rect x="13" y="2239" width="1" height="9" fill="#fff"/>
<polygon points="497.5,2238.5 497.5,2248.5 502.5,2243.5" fill="#00a000" stroke="#fff" stroke-width="1"/>
<text class="s" x="526.3" y="2246" textLength="108" lengthAdjust="spacingAndGlyphs" dy="0 0 0 0 0 0 0 0 0 -1 1">UniRef100_UPI000..</text>
<path d="M16 2253h27v3h-27zM47 2253h116v3h-116zM165 2253h332v3h-332z" fill="#00a000"/>
<path d="M43 2254h4v1h-4zM163 2254h2v1h-2z" fill="#00a000"/>
<rect x="16" y="2250" width="1" height="9" fill="#fff"/>
<polygon points="497.5,2249.5 497.5,2259.5 502.5,2254.5" fill="#00a000" stroke="#fff" stroke-width="1"/>
<text class="s" x="526.3" y="2257" textLength="96" lengthAdjust="spacingAndGlyphs" dy="0 0 0 0 0 0 0 0 0 -1 1">UniRef100_Q4GXS6</text>
<path d="M10 2264H16v3H10zM486 2264H527v3H486z" fill="#000033"/>
<path d="M16 2264h465v3h-465z" fill="#00a000"/>
<rect x="16" y="2261" width="1" height="9" fill="#fff"/>
<polygon points="481.5,2260.5 481.5,2270.5 486.5,2265.5" fill="#00a000" stroke="#fff" stroke-width="1"/>
<text class="s" x="526.3" y="2268" textLength="96" lengthAdjust="spacingAndGlyphs" dy="0 0 0 0 0 0 0 0 0 -1 1">UniRef100_Q4PM13</text>
<path d="M10 2275h474v3h-474z" fill="#00a000"/>
<rect x="10" y="2272" width="1" height="9" fill="#fff"/>
<polygon points="484.5,2271.5 484.5,2281.5 489.5,2276.5" fill="#00a000" stroke="#fff" stroke-width="1"/>
<text class="s" x="526.3" y="2279" textLength="96" lengthAdjust="spacingAndGlyphs" dy="0 0 0 0 0 0 0 0 0 -1 1">UniRef100_Q4D0U7</text>
<path d="M10 2286H16v3H10zM502 2286H527v3H502z" fill="#000033"/>
<path d="M16 2286h16v3h-16zM36 2286h127v3h-127zM165 2286h332v3h-332z" fill="#00a000"/>
<path d="M32 2287h4v1h-4zM163 2287h2v1h-2z" fill="#00a000"/>
<rect x="16" y="2283" width="1" height="9" fill="#fff"/>
<polygon points="497.5,2282.5 497.5,2292.5 502.5,2287.5" fill="#00a000" stroke="#fff" stroke-width="1"/>
<path d="M42 2289h1v2h1v2h-3v-2h1z" fill="#fff078"/>
<text class="s" x="526.3" y="2290" textLength="96" lengthAdjust="spacingAndGlyphs" dy="0 0 0 0 0 0 0 0 0 -1 1">UniRef100_C1BYW6</text>
<path d="M16 2297h15v3h-15zM35 2297h128v3h-128zM165 2297h332v3h-332z" fill="#00a000"/>
<path d="M31 2298h4v1h-4zM163 2298h2v1h-2z" fill="#00a000"/>
<rect x="16" y="2294" width="1" height="9" fill="#fff"/>
<polygon points="497.5,2293.5 497.5,2303.5 502.5,2298.5" fill="#00a000" stroke="#fff" stroke-width="1"/>
<path d="M51 2300h1v2h1v2h-3v-2h1z" fill="#fff078"/>
<text class="s" x="526.3" y="2301" textLength="96" lengthAdjust="spacingAndGlyphs" dy="0 0 0 0 0 0 0 0 0 -1 1">UniRef100_C1BEN7</text>
<path d="M10 2308H115v3H10zM502 2308H527v3H502z" fill="#000033"/>
<path d="M115 2308h116v3h-116zM233 2308h264v3h-264z" fill="#00c8c8"/>
<path d="M231 2309h2v1h-2z" fill="#00c8c8"/>
<rect x="115" y="2305" width="1" height="9" fill="#fff"/>
<polygon points="497.5,2304.5 497.5,2314.5 502.5,2309.5" fill="#00c8c8" stroke="#fff" stroke-width="1"/>
<text class="s" x="526.3" y="2312" textLength="96" lengthAdjust="spacingAndGlyphs" dy="0 0 0 0 0 0 0 0 0 -1 1">UniRef100_Q9D0P6</text>
<path d="M10 2319h474v3h-474z" fill="#00a000"/>
<rect x="10" y="2316" width="1" height="9" fill="#fff"/>
<polygon points="484.5,2315.5 484.5,2325.5 489.5,2320.5" fill="#00a000" stroke="#fff" stroke-width="1"/>
<text class="s" x="526.3" y="2323" textLength="96" lengthAdjust="spacingAndGlyphs" dy="0 0 0 0 0 0 0 0 0 -1 1">UniRef100_Q4D4L4</text>
<path d="M10 2330H16v3H10zM502 2330H527v3H502z" fill="#000033"/>
<path d="M16 2330h15v3h-15zM35 2330h128v3h-128zM165 2330h332v3h-332z" fill="#00a000"/>
<path d="M31 2331h4v1h-4zM163 2331h2v1h-2z" fill="#00a000"/>
<rect x="16" y="2327" width="1" height="9" fill="#fff"/>
<polygon points="497.5,2326.5 497.5,2336.5 502.5,2331.5" fill="#00a000" stroke="#fff" stroke-width="1"/>
<path d="M51 2333h1v2h1v2h-3v-2h1z" fill="#fff078"/>
<text class="s" x="526.3" y="2334" textLength="108" lengthAdjust="spacingAndGlyphs" dy="0 0 0 0 0 0 0 0 0 -1 1">UniRef100_UPI000..</text>
<path d="M25 2341h407v3h-407z" fill="#00a000"/>
<rect x="25" y="2338" width="1" height="9" fill="#fff"/>
<polygon points="432.5,2337.5 432.5,2347.5 437.5,2342.5" fill="#00a000" stroke="#fff" stroke-width="1"/>
<text class="s" x="526.3" y="2345" textLength="96" lengthAdjust="spacingAndGlyphs" dy="0 0 0 0 0 0 0 0 0 -1 1">UniRef100_B0XUT5</text>
<path d="M10 2352H19v3H10zM502 2352H527v3H502z" fill="#000033"/>
<path d="M19 2352h14v3h-14zM38 2352h135v3h-135zM175 2352h322v3h-322z" fill="#00a000"/>
<path d="M33 2353h5v1h-5zM173 2353h2v1h-2z" fill="#00a000"/>
<rect x="19" y="2349" width="1" height="9" fill="#fff"/>
<polygon points="497.5,2348.5 497.5,2358.5 502.5,2353.5" fill="#00a000" stroke="#fff" stroke-width="1"/>
<path d="M49 2355h1v2h1v2h-3v-2h1z" fill="#fff078"/>
<text class="s" x="526.3" y="2356" textLength="96" lengthAdjust="spacingAndGlyphs" dy="0 0 0 0 0 0 0 0 0 -1 1">UniRef100_C3Y615</text>
<path d="M115 2363h116v3h-116zM233 2363h264v3h-264z" fill="#00c8c8"/>
<path d="M231 2364h2v1h-2z" fill="#00c8c8"/>
<rect x="115" y="2360" width="1" height="9" fill="#fff"/>
<polygon points="497.5,2359.5 497.5,2369.5 502.5,2364.5" fill="#00c8c8" stroke="#fff" stroke-width="1"/>
<text class="s" x="526.3" y="2367" textLength="96" lengthAdjust="spacingAndGlyphs" dy="0 0 0 0 0 0 0 0 0 -1 1">UniRef100_Q962R8</text>
<path d="M10 2374H94v3H10zM502 2374H527v3H502z" fill="#000033"/>
<path d="M94 2374h125v3h-125zM221 2374h276v3h-276z" fill="#00c8c8"/>
<path d="M219 2375h2v1h-2z" fill="#00c8c8"/>
<rect x="94" y="2371" width="1" height="9" fill="#fff"/>
<polygon points="497.5,2370.5 497.5,2380.5 502.5,2375.5" fill="#00c8c8" stroke="#fff" stroke-width="1"/>
<text class="s" x="526.3" y="2378" textLength="96" lengthAdjust="spacingAndGlyphs" dy="0 0 0 0 0 0 0 0 0 -1 1">UniRef100_A9UDP0</text>
<path d="M16 2385h112v3h-112zM130 2385h33v3h-33zM165 2385h332v3h-332z" fill="#00a000"/>
<path d="M128 2386h2v1h-2zM163 2386h2v1h-2z" fill="#00a000"/>
<rect x="16" y="2382" width="1" height="9" fill="#fff"/>
<polygon points="497.5,2381.5 497.5,2391.5 502.5,2386.5" fill="#00a000" stroke="#fff" stroke-width="1"/>
<path d="M142 2388h1v2h1v2h-3v-2h1z" fill="#fff078"/>
<text class="s" x="526.3" y="2389" textLength="108" lengthAdjust="spacingAndGlyphs" dy="0 0 0 0 0 0 0 0 0 -1 1">UniRef100_UPI000..</text>
<path d="M10 2396H10v3H10zM502 2396H527v3H502z" fill="#000033"/>
<path d="M10 2396h14v3h-14zM30 2396h467v3h-467z" fill="#00a000"/>
<path d="M24 2397h6v1h-6z" fill="#00a000"/>
<rect x="10" y="2393" width="1" height="9" fill="#fff"/>
<polygon points="497.5,2392.5 497.5,2402.5 502.5,2397.5" fill="#00a000" stroke="#fff" stroke-width="1"/>
<text class="s" x="526.3" y="2400" textLength="96" lengthAdjust="spacingAndGlyphs" dy="0 0 0 0 0 0 0 0 0 -1 1">UniRef100_A8PXF3</text>
<path d="M75 2407h7v3h-7zM90 2407h114v3h-114zM206 2407h282v3h-282z" fill="#00c8c8"/>
<path d="M82 2408h8v1h-8zM204 2408h2v1h-2z" fill="#00c8c8"/>
<rect x="75" y="2404" width="1" height="9" fill="#fff"/>
<polygon points="488.5,2403.5 488.5,2413.5 493.5,2408.5" fill="#00c8c8" stroke="#fff" stroke-width="1"/>
<text class="s" x="526.3" y="2411" textLength="96" lengthAdjust="spacingAndGlyphs" dy="0 0 0 0 0 0 0 0 0 -1 1">UniRef100_A6MWU2</text>
<path d="M10 2418H25v3H10zM489 2418H527v3H489z" fill="#000033"/>
<path d="M25 2418h459v3h-459z" fill="#00a000"/>
<rect x="25" y="2415" width="1" height="9" fill="#fff"/>
<polygon points="484.5,2414.5 484.5,2424.5 489.5,2419.5" fill="#00a000" stroke="#fff" stroke-width="1"/>
<text class="s" x="526.3" y="2422" textLength="96" lengthAdjust="spacingAndGlyphs" dy="0 0 0 0 0 0 0 0 0 -1 1">UniRef100_A4HC02</text>
<path d="M75 2429h7v3h-7zM90 2429h114v3h-114zM206 2429h282v3h-282z" fill="#00c8c8"/>
<path d="M82 2430h8v1h-8zM204 2430h2v1h-2z" fill="#00c8c8"/>
<rect x="75" y="2426" width="1" height="9" fill="#fff"/>
<polygon points="488.5,2425.5 488.5,2435.5 493.5,2430.5" fill="#00c8c8" stroke="#fff" stroke-width="1"/>
<text class="s" x="526.3" y="2433" textLength="96" lengthAdjust="spacingAndGlyphs" dy="0 0 0 0 0 0 0 0 0 -1 1">UniRef100_A6MWV0</text>
<path d="M10 2440H75v3H10zM493 2440H527v3H493z" fill="#000033"/>
<path d="M75 2440h7v3h-7zM90 2440h114v3h-114zM206 2440h282v3h-282z" fill="#00c8c8"/>
<path d="M82 2441h8v1h-8zM204 2441h2v1h-2z" fill="#00c8c8"/>
<rect x="75" y="2437" width="1" height="9" fill="#fff"/>
<polygon points="488.5,2436.5 488.5,2446.5 493.5,2441.5" fill="#00c8c8" stroke="#fff" stroke-width="1"/>
<text class="s" x="526.3" y="2444" textLength="96" lengthAdjust="spacingAndGlyphs" dy="0 0 0 0 0 0 0 0 0 -1 1">UniRef100_A6MWV7</text>
<path d="M115 2451h116v3h-116zM233 2451h255v3h-255z" fill="#00c8c8"/>
<path d="M231 2452h2v1h-2z" fill="#00c8c8"/>
<rect x="115" y="2448" width="1" height="9" fill="#fff"/>
<polygon points="488.5,2447.5 488.5,2457.5 493.5,2452.5" fill="#00c8c8" stroke="#fff" stroke-width="1"/>
<text class="s" x="526.3" y="2455" textLength="96" lengthAdjust="spacingAndGlyphs" dy="0 0 0 0 0 0 0 0 0 -1 1">UniRef100_A6MWV1</text>
<path d="M10 2462H115v3H10zM493 2462H527v3H493z" fill="#000033"/>
<path d="M115 2462h116v3h-116zM233 2462h255v3h-255z" fill="#00c8c8"/>
<path d="M231 2463h2v1h-2z" fill="#00c8c8"/>
<rect x="115" y="2459" width="1" height="9" fill="#fff"/>
<polygon points="488.5,2458.5 488.5,2468.5 493.5,2463.5" fill="#00c8c8" stroke="#fff" stroke-width="1"/>
<text class="s" x="526.3" y="2466" textLength="96" lengthAdjust="spacingAndGlyphs" dy="0 0 0 0 0 0 0 0 0 -1 1">UniRef100_A6MWU6</text>
<path d="M16 2473h15v3h-15zM35 2473h128v3h-128zM165 2473h332v3h-332z" fill="#00a000"/>
<path d="M31 2474h4v1h-4zM163 2474h2v1h-2z" fill="#00a000"/>
<rect x="16" y="2470" width="1" height="9" fill="#fff"/>
<polygon points="497.5,2469.5 497.5,2479.5 502.5,2474.5" fill="#00a000" stroke="#fff" stroke-width="1"/>
<path d="M51 2476h1v2h1v2h-3v-2h1z" fill="#fff078"/>
<path d="M149 2476h1v2h1v2h-3v-2h1z" fill="#fff078"/>
<text class="s" x="526.3" y="2477" textLength="108" lengthAdjust="spacingAndGlyphs" dy="0 0 0 0 0 0 0 0 0 -1 1">UniRef100_UPI000..</text>
<path d="M10 2484H25v3H10zM458 2484H527v3H458z" fill="#000033"/>
<path d="M25 2484h18v3h-18zM46 2484h407v3h-407z" fill="#00a000"/>
<path d="M43 2485h3v1h-3z" fill="#00a000"/>
<rect x="25" y="2481" width="1" height="9" fill="#fff"/>
<polygon points="453.5,2480.5 453.5,2490.5 458.5,2485.5" fill="#00a000" stroke="#fff" stroke-width="1"/>
<text class="s" x="526.3" y="2488" textLength="96" lengthAdjust="spacingAndGlyphs" dy="0 0 0 0 0 0 0 0 0 -1 1">UniRef100_B6KES7</text>
<path d="M13 2495h15v3h-15zM33 2495h464v3h-464z" fill="#00a000"/>
<path d="M28 2496h5v1h-5z" fill="#00a000"/>
<rect x="13" y="2492" width="1" height="9" fill="#fff"/>
<polygon points="497.5,2491.5 497.5,2501.5 502.5,2496.5" fill="#00a000" stroke="#fff" stroke-width="1"/>
<path d="M48 2498h1v2h1v2h-3v-2h1z" fill="#fff078"/>
<text class="s" x="526.3" y="2499" textLength="96" lengthAdjust="spacingAndGlyphs" dy="0 0 0 0 0 0 0 0 0 -1 1">UniRef100_B8C1P3</text>
<path d="M10 2506H22v3H10zM502 2506H527v3H502z" fill="#000033"/>
<path d="M22 2506h475v3h-475z" fill="#00a000"/>
<rect x="22" y="2503" width="1" height="9" fill="#fff"/>
<polygon points="497.5,2502.5 497.5,2512.5 502.5,2507.5" fill="#00a000" stroke="#fff" stroke-width="1"/>
<text class="s" x="526.3" y="2510" textLength="96" lengthAdjust="spacingAndGlyphs" dy="0 0 0 0 0 0 0 0 0 -1 1">UniRef100_B7G2U6</text>
<path d="M25 2517h29v3h-29zM56 2517h441v3h-441z" fill="#00a000"/>
<path d="M54 2518h2v1h-2z" fill="#00a000"/>
<rect x="25" y="2514" width="1" height="9" fill="#fff"/>
<polygon points="497.5,2513.5 497.5,2523.5 502.5,2518.5" fill="#00a000" stroke="#fff" stroke-width="1"/>
<path d="M175 2520h1v2h1v2h-3v-2h1z" fill="#fff078"/>
<text class="s" x="526.3" y="2521" textLength="96" lengthAdjust="spacingAndGlyphs" dy="0 0 0 0 0 0 0 0 0 -1 1">UniRef100_B6AK39</text>
<path d="M10 2528H16v3H10zM502 2528H527v3H502z" fill="#000033"/>
<path d="M16 2528h15v3h-15zM35 2528h128v3h-128zM165 2528h332v3h-332z" fill="#00a000"/>
<path d="M31 2529h4v1h-4zM163 2529h2v1h-2z" fill="#00a000"/>
<rect x="16" y="2525" width="1" height="9" fill="#fff"/>
<polygon points="497.5,2524.5 497.5,2534.5 502.5,2529.5" fill="#00a000" stroke="#fff" stroke-width="1"/>
<path d="M51 2531h1v2h1v2h-3v-2h1z" fill="#fff078"/>
<path d="M149 2531h1v2h1v2h-3v-2h1z" fill="#fff078"/>
<text class="s" x="526.3" y="2532" textLength="108" lengthAdjust="spacingAndGlyphs" dy="0 0 0 0 0 0 0 0 0 -1 1">UniRef100_UPI000..</text>
<path d="M25 2539h12v3h-12zM42 2539h136v3h-136zM180 2539h317v3h-317z" fill="#00a000"/>
<path d="M37 2540h5v1h-5zM178 2540h2v1h-2z" fill="#00a000"/>
<rect x="25" y="2536" width="1" height="9" fill="#fff"/>
<polygon points="497.5,2535.5 497.5,2545.5 502.5,2540.5" fill="#00a000" stroke="#fff" stroke-width="1"/>
<path d="M57 2542h1v2h1v2h-3v-2h1z" fill="#fff078"/>
<text class="s" x="526.3" y="2543" textLength="96" lengthAdjust="spacingAndGlyphs" dy="0 0 0 0 0 0 0 0 0 -1 1">UniRef100_A9V2L2</text>
<path d="M10 2550H25v3H10zM458 2550H527v3H458z" fill="#000033"/>
<path d="M25 2550h14v3h-14zM45 2550h8v3h-8zM55 2550h398v3h-398z" fill="#00a000"/>
<path d="M39 2551h6v1h-6zM53 2551h2v1h-2z" fill="#00a000"/>
<rect x="25" y="2547" width="1" height="9" fill="#fff"/>
<polygon points="453.5,2546.5 453.5,2556.5 458.5,2551.5" fill="#00a000" stroke="#fff" stroke-width="1"/>
<text class="s" x="526.3" y="2554" textLength="96" lengthAdjust="spacingAndGlyphs" dy="0 0 0 0 0 0 0 0 0 -1 1">UniRef100_A7AU01</text>
<path d="M87 2561h397v3h-397z" fill="#00a000"/>
<rect x="87" y="2558" width="1" height="9" fill="#fff"/>
<polygon points="484.5,2557.5 484.5,2567.5 489.5,2562.5" fill="#00a000" stroke="#fff" stroke-width="1"/>
<text class="s" x="526.3" y="2565" textLength="96" lengthAdjust="spacingAndGlyphs" dy="0 0 0 0 0 0 0 0 0 -1 1">UniRef100_A4HYZ5</text>
<path d="M10 2572H172v3H10zM493 2572H527v3H493z" fill="#000033"/>
<path d="M172 2572h316v3h-316z" fill="#00c8c8"/>
<rect x="172" y="2569" width="1" height="9" fill="#fff"/>
<polygon points="488.5,2568.5 488.5,2578.5 493.5,2573.5" fill="#00c8c8" stroke="#fff" stroke-width="1"/>
<text class="s" x="526.3" y="2576" textLength="96" lengthAdjust="spacingAndGlyphs" dy="0 0 0 0 0 0 0 0 0 -1 1">UniRef100_Q017I2</text>
<path d="M25 2583h12v3h-12zM42 2583h129v3h-129zM173 2583h324v3h-324z" fill="#00a000"/>
<path d="M37 2584h5v1h-5zM171 2584h2v1h-2z" fill="#00a000"/>
<rect x="25" y="2580" width="1" height="9" fill="#fff"/>
<polygon points="497.5,2579.5 497.5,2589.5 502.5,2584.5" fill="#00a000" stroke="#fff" stroke-width="1"/>
<path d="M59 2586h1v2h1v2h-3v-2h1z" fill="#fff078"/>
<text class="s" x="526.3" y="2587" textLength="108" lengthAdjust="spacingAndGlyphs" dy="0 0 0 0 0 0 0 0 0 -1 1">UniRef100_UPI000..</text>
<path d="M10 2594H25v3H10zM458 2594H527v3H458z" fill="#000033"/>
<path d="M25 2594h13v3h-13zM47 2594h406v3h-406z" fill="#00a000"/>
<path d="M38 2595h9v1h-9z" fill="#00a000"/>
<rect x="25" y="2591" width="1" height="9" fill="#fff"/>
<polygon points="453.5,2590.5 453.5,2600.5 458.5,2595.5" fill="#00a000" stroke="#fff" stroke-width="1"/>
<path d="M57 2597h1v2h1v2h-3v-2h1z" fill="#fff078"/>
<text class="s" x="526.3" y="2598" textLength="96" lengthAdjust="spacingAndGlyphs" dy="0 0 0 0 0 0 0 0 0 -1 1">UniRef100_Q4UDZ8</text>
<path d="M25 2605h14v3h-14zM43 2605h10v3h-10zM56 2605h397v3h-397z" fill="#00a000"/>
<path d="M39 2606h4v1h-4zM53 2606h3v1h-3z" fill="#00a000"/>
<rect x="25" y="2602" width="1" height="9" fill="#fff"/>
<polygon points="453.5,2601.5 453.5,2611.5 458.5,2606.5" fill="#00a000" stroke="#fff" stroke-width="1"/>
<text class="s" x="526.3" y="2609" textLength="96" lengthAdjust="spacingAndGlyphs" dy="0 0 0 0 0 0 0 0 0 -1 1">UniRef100_Q4N5J2</text>
<path d="M10 2616H25v3H10zM486 2616H527v3H486z" fill="#000033"/>
<path d="M25 2616h9v3h-9zM39 2616h442v3h-442z" fill="#00a000"/>
<path d="M34 2617h5v1h-5z" fill="#00a000"/>
<rect x="25" y="2613" width="1" height="9" fill="#fff"/>
<polygon points="481.5,2612.5 481.5,2622.5 486.5,2617.5" fill="#00a000" stroke="#fff" stroke-width="1"/>
<text class="s" x="526.3" y="2620" textLength="96" lengthAdjust="spacingAndGlyphs" dy="0 0 0 0 0 0 0 0 0 -1 1">UniRef100_A2DHU8</text>
<path d="M13 2627h14v3h-14zM34 2627h8v3h-8zM50 2627h403v3h-403z" fill="#00a000"/>
<path d="M27 2628h7v1h-7zM42 2628h8v1h-8z" fill="#00a000"/>
<rect x="13" y="2624" width="1" height="9" fill="#fff"/>
<polygon points="453.5,2623.5 453.5,2633.5 458.5,2628.5" fill="#00a000" stroke="#fff" stroke-width="1"/>
<text class="s" x="526.3" y="2631" textLength="96" lengthAdjust="spacingAndGlyphs" dy="0 0 0 0 0 0 0 0 0 -1 1">UniRef100_A9BK75</text>
<path d="M10 2638H25v3H10zM486 2638H527v3H486z" fill="#000033"/>
<path d="M25 2638h9v3h-9zM39 2638h442v3h-442z" fill="#00a000"/>
<path d="M34 2639h5v1h-5z" fill="#00a000"/>
<rect x="25" y="2635" width="1" height="9" fill="#fff"/>
<polygon points="481.5,2634.5 481.5,2644.5 486.5,2639.5" fill="#00a000" stroke="#fff" stroke-width="1"/>
<text class="s" x="526.3" y="2642" textLength="96" lengthAdjust="spacingAndGlyphs" dy="0 0 0 0 0 0 0 0 0 -1 1">UniRef100_A2FXW4</text>
<path d="M103 2649h122v3h-122zM227 2649h270v3h-270z" fill="#00a000"/>
<path d="M225 2650h2v1h-2z" fill="#00a000"/>
<rect x="103" y="2646" width="1" height="9" fill="#fff"/>
<polygon points="497.5,2645.5 497.5,2655.5 502.5,2650.5" fill="#00a000" stroke="#fff" stroke-width="1"/>
<text class="s" x="526.3" y="2653" textLength="96" lengthAdjust="spacingAndGlyphs" dy="0 0 0 0 0 0 0 0 0 -1 1">UniRef100_Q9U9A0</text>
<path d="M10 2660H41v3H10zM461 2660H527v3H461z" fill="#000033"/>
<path d="M41 2660h18v3h-18zM67 2660h389v3h-389z" fill="#00a000"/>
<path d="M59 2661h8v1h-8z" fill="#00a000"/>
<rect x="41" y="2657" width="1" height="9" fill="#fff"/>
<polygon points="456.5,2656.5 456.5,2666.5 461.5,2661.5" fill="#00a000" stroke="#fff" stroke-width="1"/>
<text class="s" x="526.3" y="2664" textLength="96" lengthAdjust="spacingAndGlyphs" dy="0 0 0 0 0 0 0 0 0 -1 1">UniRef100_A9C3W5</text>
<path d="M122 2671h331v3h-331z" fill="#00c8c8"/>
<rect x="122" y="2668" width="1" height="9" fill="#fff"/>
<polygon points="453.5,2667.5 453.5,2677.5 458.5,2672.5" fill="#00c8c8" stroke="#fff" stroke-width="1"/>
<text class="s" x="526.3" y="2675" textLength="96" lengthAdjust="spacingAndGlyphs" dy="0 0 0 0 0 0 0 0 0 -1 1">UniRef100_Q15GB4</text>
<path d="M10 2682H16v3H10zM377 2682H527v3H377z" fill="#000033"/>
<path d="M16 2682h15v3h-15zM37 2682h335v3h-335z" fill="#00a000"/>
<path d="M31 2683h6v1h-6z" fill="#00a000"/>
<rect x="16" y="2679" width="1" height="9" fill="#fff"/>
<polygon points="372.5,2678.5 372.5,2688.5 377.5,2683.5" fill="#00a000" stroke="#fff" stroke-width="1"/>
<text class="s" x="526.3" y="2686" textLength="96" lengthAdjust="spacingAndGlyphs" dy="0 0 0 0 0 0 0 0 0 -1 1">UniRef100_Q17IE1</text>
<path d="M159 2693h101v3h-101zM262 2693h235v3h-235z" fill="#00c8c8"/>
<path d="M260 2694h2v1h-2z" fill="#00c8c8"/>
<rect x="159" y="2690" width="1" height="9" fill="#fff"/>
<polygon points="497.5,2689.5 497.5,2699.5 502.5,2694.5" fill="#00c8c8" stroke="#fff" stroke-width="1"/>
<text class="s" x="526.3" y="2697" textLength="96" lengthAdjust="spacingAndGlyphs" dy="0 0 0 0 0 0 0 0 0 -1 1">UniRef100_Q9XSU4</text>
<path d="M10 2704H41v3H10zM461 2704H527v3H461z" fill="#000033"/>
<path d="M41 2704h18v3h-18zM67 2704h389v3h-389z" fill="#00a000"/>
<path d="M59 2705h8v1h-8z" fill="#00a000"/>
<rect x="41" y="2701" width="1" height="9" fill="#fff"/>
<polygon points="456.5,2700.5 456.5,2710.5 461.5,2705.5" fill="#00a000" stroke="#fff" stroke-width="1"/>
<text class="s" x="526.3" y="2708" textLength="108" lengthAdjust="spacingAndGlyphs" dy="0 0 0 0 0 0 0 0 0 -1 1">UniRef100_UPI000..</text>
<path d="M25 2715h344v3h-344z" fill="#00c8c8"/>
<rect x="25" y="2712" width="1" height="9" fill="#fff"/>
<polygon points="369.5,2711.5 369.5,2721.5 374.5,2716.5" fill="#00c8c8" stroke="#fff" stroke-width="1"/>
<text class="s" x="526.3" y="2719" textLength="96" lengthAdjust="spacingAndGlyphs" dy="0 0 0 0 0 0 0 0 0 -1 1">UniRef100_Q2HG09</text>
<path d="M10 2726H16v3H10zM377 2726H527v3H377z" fill="#000033"/>
<path d="M16 2726h15v3h-15zM35 2726h337v3h-337z" fill="#00a000"/>
<path d="M31 2727h4v1h-4z" fill="#00a000"/>
<rect x="16" y="2723" width="1" height="9" fill="#fff"/>
<polygon points="372.5,2722.5 372.5,2732.5 377.5,2727.5" fill="#00a000" stroke="#fff" stroke-width="1"/>
<path d="M51 2729h1v2h1v2h-3v-2h1z" fill="#fff078"/>
<text class="s" x="526.3" y="2730" textLength="108" lengthAdjust="spacingAndGlyphs" dy="0 0 0 0 0 0 0 0 0 -1 1">UniRef100_UPI000..</text>
<path d="M156 2737h101v3h-101zM259 2737h238v3h-238z" fill="#00c8c8"/>
<path d="M257 2738h2v1h-2z" fill="#00c8c8"/>
<rect x="156" y="2734" width="1" height="9" fill="#fff"/>
<polygon points="497.5,2733.5 497.5,2743.5 502.5,2738.5" fill="#00c8c8" stroke="#fff" stroke-width="1"/>
<text class="s" x="526.3" y="2741" textLength="96" lengthAdjust="spacingAndGlyphs" dy="0 0 0 0 0 0 0 0 0 -1 1">UniRef100_B4QC90</text>
<path d="M10 2748H144v3H10zM502 2748H527v3H502z" fill="#000033"/>
<path d="M144 2748h353v3h-353z" fill="#00a000"/>
<rect x="144" y="2745" width="1" height="9" fill="#fff"/>
<polygon points="497.5,2744.5 497.5,2754.5 502.5,2749.5" fill="#00a000" stroke="#fff" stroke-width="1"/>
<path d="M159 2751h1v2h1v2h-3v-2h1z" fill="#fff078"/>
<path d="M258 2751h1v2h1v2h-3v-2h1z" fill="#fff078"/>
<text class="s" x="526.3" y="2752" textLength="96" lengthAdjust="spacingAndGlyphs" dy="0 0 0 0 0 0 0 0 0 -1 1">UniRef100_Q4PEZ6</text>
<path d="M126 2759h327v3h-327z" fill="#00a000"/>
<rect x="126" y="2756" width="1" height="9" fill="#fff"/>
<polygon points="453.5,2755.5 453.5,2765.5 458.5,2760.5" fill="#00a000" stroke="#fff" stroke-width="1"/>
<text class="s" x="526.3" y="2763" textLength="96" lengthAdjust="spacingAndGlyphs" dy="0 0 0 0 0 0 0 0 0 -1 1">UniRef100_Q98S88</text>
<path d="M10 2770H16v3H10zM502 2770H527v3H502z" fill="#000033"/>
<path d="M16 2770h15v3h-15zM35 2770h128v3h-128zM165 2770h332v3h-332z" fill="#00a000"/>
<path d="M31 2771h4v1h-4zM163 2771h2v1h-2z" fill="#00a000"/>
<rect x="16" y="2767" width="1" height="9" fill="#fff"/>
<polygon points="497.5,2766.5 497.5,2776.5 502.5,2771.5" fill="#00a000" stroke="#fff" stroke-width="1"/>
<path d="M51 2773h1v2h1v2h-3v-2h1z" fill="#fff078"/>
<text class="s" x="526.3" y="2774" textLength="108" lengthAdjust="spacingAndGlyphs" dy="0 0 0 0 0 0 0 0 0 -1 1">UniRef100_UPI000..</text>
<path d="M16 2781h15v3h-15zM34 2781h338v3h-338z" fill="#00a000"/>
<path d="M31 2782h3v1h-3z" fill="#00a000"/>
<rect x="16" y="2778" width="1" height="9" fill="#fff"/>
<polygon points="372.5,2777.5 372.5,2787.5 377.5,2782.5" fill="#00a000" stroke="#fff" stroke-width="1"/>
<path d="M51 2784h1v2h1v2h-3v-2h1z" fill="#fff078"/>
<text class="s" x="526.3" y="2785" textLength="108" lengthAdjust="spacingAndGlyphs" dy="0 0 0 0 0 0 0 0 0 -1 1">UniRef100_UPI000..</text>
<path d="M10 2792H16v3H10zM377 2792H527v3H377z" fill="#000033"/>
<path d="M16 2792h15v3h-15zM34 2792h338v3h-338z" fill="#00a000"/>
<path d="M31 2793h3v1h-3z" fill="#00a000"/>
<rect x="16" y="2789" width="1" height="9" fill="#fff"/>
<polygon points="372.5,2788.5 372.5,2798.5 377.5,2793.5" fill="#00a000" stroke="#fff" stroke-width="1"/>
<path d="M51 2795h1v2h1v2h-3v-2h1z" fill="#fff078"/>
<text class="s" x="526.3" y="2796" textLength="108" lengthAdjust="spacingAndGlyphs" dy="0 0 0 0 0 0 0 0 0 -1 1">UniRef100_UPI000..</text>
<text class="s" x="10" y="2815" textLength="66" lengthAdjust="spacingAndGlyphs">Large gaps:</text>
<path d="M82 2808h1v2h1v3h1v3h-5v-3h1v-3h1z" fill="#fff078"/>
<text class="s" x="88" y="2815" textLength="66" lengthAdjust="spacingAndGlyphs">(in Query)/</text>
<rect x="155" y="2811" width="6" height="1" fill="#00c8c8"/>
<text class="s" x="166" y="2815" textLength="72" lengthAdjust="spacingAndGlyphs">(in Subject)</text>
<rect x="438" y="2807" width="1" height="9" fill="#3c3200"/><rect x="456" y="2807" width="1" height="9" fill="#3c3200"/>
<rect x="439" y="2810" width="17" height="3" fill="#00c8c8"/>
<text class="s" x="460" y="2815" textLength="54" lengthAdjust="spacingAndGlyphs">=100char.</text>
</svg></body></html>
